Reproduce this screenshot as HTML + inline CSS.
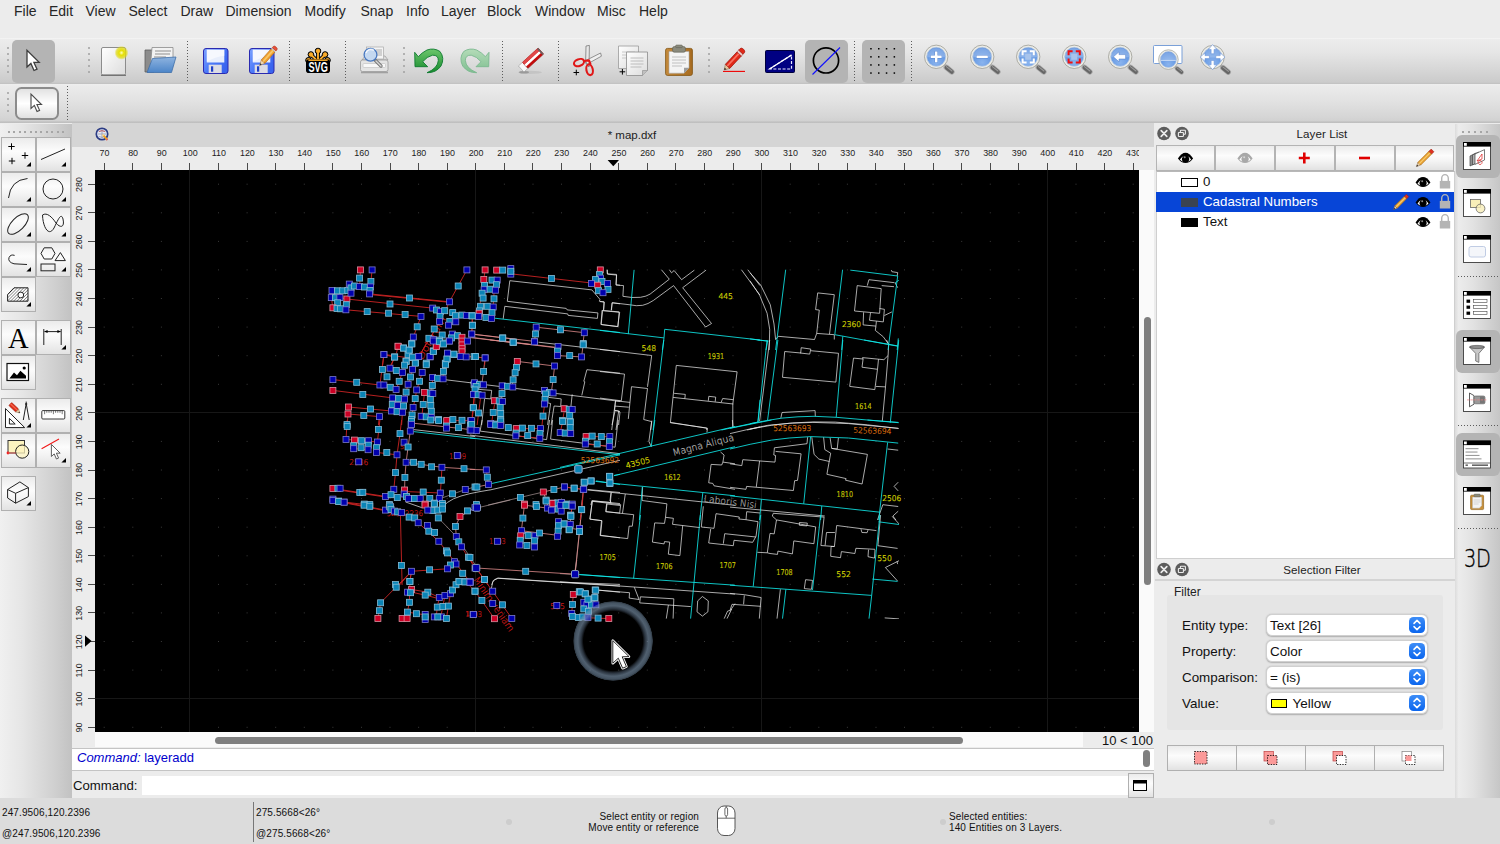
<!DOCTYPE html>
<html><head><meta charset="utf-8"><title>map.dxf</title>
<style>
html,body{margin:0;padding:0}
body{width:1500px;height:844px;overflow:hidden;position:relative;background:#ececec;font-family:"Liberation Sans",sans-serif;color:#1e1e1e}
.a{position:absolute}
.t{position:absolute;white-space:nowrap;line-height:1}
svg{position:absolute;overflow:visible}
.tb{position:absolute;left:0;width:1500px}
.sel{position:absolute;background:#b4b4b4;border-radius:5px}
.vsep{position:absolute;width:1px;background:repeating-linear-gradient(#5c5c5c 0,#5c5c5c 1px,transparent 1px,transparent 3px)}
.hsep{position:absolute;height:1px;background:repeating-linear-gradient(90deg,#5c5c5c 0,#5c5c5c 1px,transparent 1px,transparent 3px)}
.hgrip{position:absolute;height:2px;background:repeating-linear-gradient(90deg,#a6a6a6 0,#a6a6a6 2px,transparent 2px,transparent 5.4px)}
.grip{position:absolute;width:2px}
.grip i{position:absolute;left:0;width:2px;height:2px;background:#a0a0a0;border-radius:1px}
.btn{position:absolute;box-sizing:border-box;border:1px solid #b0b0b0;background:linear-gradient(#ebebeb 0,#fcfcfc 40%,#f5f5f5 60%,#e2e2e2 100%)}
.combo{position:absolute;box-sizing:border-box;width:162px;height:22px;background:#fff;border:1px solid #d0d0d0;border-radius:6px;box-shadow:0 0.5px 1.5px rgba(0,0,0,.25)}
.combo b{position:absolute;right:2px;top:2px;width:16px;height:16px;border-radius:4.5px;background:linear-gradient(#3d8df7,#0b66ee)}
.combo span{position:absolute;left:3.5px;top:3px;font-size:13.5px;line-height:15px;font-weight:normal;color:#111}
</style></head><body>
<div class="a" style="left:0;top:0;width:1500px;height:38px;background:#ececec"></div><div class="t" style="left:14px;top:4.1px;font-size:14px;color:#262626">File</div><div class="t" style="left:49px;top:4.1px;font-size:14px;color:#262626">Edit</div><div class="t" style="left:85.5px;top:4.1px;font-size:14px;color:#262626">View</div><div class="t" style="left:128.5px;top:4.1px;font-size:14px;color:#262626">Select</div><div class="t" style="left:180.5px;top:4.1px;font-size:14px;color:#262626">Draw</div><div class="t" style="left:225.5px;top:4.1px;font-size:14px;color:#262626">Dimension</div><div class="t" style="left:304.5px;top:4.1px;font-size:14px;color:#262626">Modify</div><div class="t" style="left:360.5px;top:4.1px;font-size:14px;color:#262626">Snap</div><div class="t" style="left:406px;top:4.1px;font-size:14px;color:#262626">Info</div><div class="t" style="left:441px;top:4.1px;font-size:14px;color:#262626">Layer</div><div class="t" style="left:487px;top:4.1px;font-size:14px;color:#262626">Block</div><div class="t" style="left:535px;top:4.1px;font-size:14px;color:#262626">Window</div><div class="t" style="left:597px;top:4.1px;font-size:14px;color:#262626">Misc</div><div class="t" style="left:639px;top:4.1px;font-size:14px;color:#262626">Help</div>
<div class="tb" style="top:38px;height:46px;background:linear-gradient(#f6f6f6 0,#ececec 1.5px,#e6e6e6 30%,#d8d8d8 65%,#cbcbcb 96%,#c0c0c0 100%)"></div><div class="tb" style="top:84px;height:38px;background:linear-gradient(#eeeeee 0,#ebebeb 2px,#e2e2e2 45%,#d6d6d6 85%,#d0d0d0 100%)"></div><div class="tb" style="top:120.5px;height:2.5px;background:linear-gradient(#cacaca,#bcbcbc)"></div><div class="sel" style="left:12px;top:40px;width:43px;height:43px"></div><div class="sel" style="left:805px;top:40px;width:43px;height:43px"></div><div class="sel" style="left:862px;top:40px;width:43px;height:43px"></div><div class="vsep" style="left:187px;top:41px;height:40px"></div><div class="vsep" style="left:289px;top:41px;height:40px"></div><div class="vsep" style="left:345px;top:41px;height:40px"></div><div class="vsep" style="left:502px;top:41px;height:40px"></div><div class="vsep" style="left:558px;top:41px;height:40px"></div><div class="vsep" style="left:854px;top:41px;height:40px"></div><div class="vsep" style="left:911px;top:41px;height:40px"></div><div class="vsep" style="left:67px;top:86px;height:34px"></div><div class="grip" style="left:7px;top:0"><i style="top:47px"></i><i style="top:53px"></i><i style="top:59px"></i><i style="top:65px"></i><i style="top:71px"></i></div><div class="grip" style="left:88px;top:0"><i style="top:47px"></i><i style="top:53px"></i><i style="top:59px"></i><i style="top:65px"></i><i style="top:71px"></i></div><div class="grip" style="left:403px;top:0"><i style="top:47px"></i><i style="top:53px"></i><i style="top:59px"></i><i style="top:65px"></i><i style="top:71px"></i></div><div class="grip" style="left:708px;top:0"><i style="top:47px"></i><i style="top:53px"></i><i style="top:59px"></i><i style="top:65px"></i><i style="top:71px"></i></div><div class="grip" style="left:7px;top:0"><i style="top:92px"></i><i style="top:98px"></i><i style="top:104px"></i><i style="top:110px"></i></div><div class="a" style="left:14.5px;top:87.2px;width:44.2px;height:32.5px;box-sizing:border-box;border:2px solid #8c8c8c;border-radius:6.5px;background:linear-gradient(#e2e2e2,#ffffff 50%,#e0e0e0)"></div><svg width="0" height="0" style="left:0;top:0"><defs>
<linearGradient id="gpaper" x1="0" y1="0" x2="1" y2="1"><stop offset="0" stop-color="#fff"/><stop offset="1" stop-color="#dcdcdc"/></linearGradient>
<radialGradient id="gglow"><stop offset="0" stop-color="#ffffc0"/><stop offset=".35" stop-color="#e6e000"/><stop offset=".75" stop-color="#e0da10" stop-opacity=".7"/><stop offset="1" stop-color="#e0da10" stop-opacity="0"/></radialGradient>
<linearGradient id="gfold" x1="0" y1="0" x2="0" y2="1"><stop offset="0" stop-color="#8fb4e0"/><stop offset="1" stop-color="#4c85c8"/></linearGradient>
<linearGradient id="gflop" x1="0" y1="0" x2="1" y2=".6"><stop offset="0" stop-color="#7ea4ff"/><stop offset=".5" stop-color="#4c7af8"/><stop offset="1" stop-color="#3a64ee"/></linearGradient>
<linearGradient id="gundo" x1="0" y1="0" x2="0" y2="1"><stop offset="0" stop-color="#6cc66c"/><stop offset="1" stop-color="#168a2c"/></linearGradient>
<linearGradient id="gredo" x1="0" y1="0" x2="0" y2="1"><stop offset="0" stop-color="#b4dcb8"/><stop offset="1" stop-color="#7fbe90"/></linearGradient>
<radialGradient id="glens" cx=".5" cy=".8" r=".9"><stop offset="0" stop-color="#8ab4ee"/><stop offset=".5" stop-color="#6a9ce4"/><stop offset="1" stop-color="#4c84d8"/></radialGradient>
<linearGradient id="gclip" x1="0" y1="0" x2="1" y2="0"><stop offset="0" stop-color="#c48a3c"/><stop offset="1" stop-color="#a86c20"/></linearGradient>
<linearGradient id="gpencil" x1="0" y1="0" x2="1" y2="1"><stop offset="0" stop-color="#f4c878"/><stop offset="1" stop-color="#d89428"/></linearGradient>
</defs></svg><svg style="left:0px;top:0px" width="1500" height="130" viewBox="0 0 1500 130"><path d="M0,0 L0,16.8 L3.9,13.2 L7,20.3 L10,19 L6.9,12.2 L12.2,12.2 Z" transform="translate(27,50.2)" fill="#fff" stroke="#3c3c3c" stroke-width="1.3" stroke-linejoin="miter"/><path d="M0,0 L0,16.8 L3.9,13.2 L7,20.3 L10,19 L6.9,12.2 L12.2,12.2 Z" transform="translate(31,94) scale(.86)" fill="#fff" stroke="#4a4a4a" stroke-width="1.3"/><rect x="101.5" y="47.5" width="24" height="27.5" rx="1.5" fill="url(#gpaper)" stroke="#8c8c8c" stroke-width="1"/><path d="M101,75.3 h25" stroke="#6e6e6e" stroke-width="1.2"/><circle cx="121.5" cy="52.8" r="7" fill="url(#gglow)"/><path d="M145,50 l8,0 l1,2 l0,20 l-9,0 z" fill="#8c8c8c" stroke="#5e5e5e" stroke-width=".8"/><path d="M152,47.5 l21,0 l0,12 l-23,12 z" fill="#f2f2f2" stroke="#8a8a8a" stroke-width=".8"/><path d="M155,51 h16 M155,54 h15 M154,57 h12" stroke="#b0b0b0" stroke-width="1.6"/><path d="M152.5,58.5 l23.5,-1.5 l-4.5,15.5 l-24.5,0 z" fill="url(#gfold)" stroke="#3f6fa8" stroke-width=".8"/><rect x="203.5" y="48.5" width="24.5" height="25" rx="2.5" fill="url(#gflop)" stroke="#2a2ab0" stroke-width="1"/><rect x="206.8" y="49.7" width="17.5" height="12.8" fill="#e8eefc"/><path d="M206.8,49.7 h17.5 v6 q-9,1 -17.5,6 z" fill="#fff" opacity=".6"/><rect x="208.7" y="64.7" width="13" height="8.3" fill="#dcdce4"/><rect x="211.0" y="66.3" width="2.2" height="5.4" fill="#1d3fc8"/><rect x="249.5" y="48.5" width="24.5" height="25" rx="2.5" fill="url(#gflop)" stroke="#2a2ab0" stroke-width="1"/><rect x="252.8" y="49.7" width="17.5" height="12.8" fill="#e8eefc"/><path d="M252.8,49.7 h17.5 v6 q-9,1 -17.5,6 z" fill="#fff" opacity=".6"/><rect x="254.7" y="64.7" width="13" height="8.3" fill="#dcdce4"/><rect x="257.0" y="66.3" width="2.2" height="5.4" fill="#1d3fc8"/><g transform="translate(259.6,65.6) rotate(-48.4)"><path d="M5.4,-2.5 L0,0 L5.4,2.5 Z" fill="#f0d8b0" stroke="#a07040" stroke-width=".5"/><path d="M0,0 l2.2,-1 v2z" fill="#333"/><rect x="5.4" y="-2.5" width="15" height="5" fill="#f0a030" stroke="#b86a10" stroke-width=".6"/><rect x="5.4" y="-1" width="15" height="1.8" fill="#f8c868"/><rect x="20.4" y="-2.5" width="1.4" height="5" fill="#d8d8d8"/><path d="M21.8,-2.5 h1.6 a1.4,2.5 0 0 1 0,5 h-1.6z" fill="#e85038" stroke="#a02810" stroke-width=".5"/></g><g stroke="#000" fill="#000"><path d="M318,61.6 L318.0,51.0" stroke-width="3.8" stroke-linecap="round" fill="none"/><circle cx="318.0" cy="51.0" r="2.8"/><path d="M318,61.6 L310.9,54.5" stroke-width="3.8" stroke-linecap="round" fill="none"/><circle cx="310.9" cy="54.5" r="2.8"/><path d="M318,61.6 L325.1,54.5" stroke-width="3.8" stroke-linecap="round" fill="none"/><circle cx="325.1" cy="54.5" r="2.8"/><path d="M318,61.6 L308.5,60.3" stroke-width="3.8" stroke-linecap="round" fill="none"/><circle cx="308.5" cy="60.3" r="2.8"/><path d="M318,61.6 L327.5,60.3" stroke-width="3.8" stroke-linecap="round" fill="none"/><circle cx="327.5" cy="60.3" r="2.8"/></g><g stroke="#fbad2c" fill="#fbad2c"><path d="M318,61.6 L318.0,51.0" stroke-width="1.9" stroke-linecap="round" fill="none"/><circle cx="318.0" cy="51.0" r="1.8"/><path d="M318,61.6 L310.9,54.5" stroke-width="1.9" stroke-linecap="round" fill="none"/><circle cx="310.9" cy="54.5" r="1.8"/><path d="M318,61.6 L325.1,54.5" stroke-width="1.9" stroke-linecap="round" fill="none"/><circle cx="325.1" cy="54.5" r="1.8"/><path d="M318,61.6 L308.5,60.3" stroke-width="1.9" stroke-linecap="round" fill="none"/><circle cx="308.5" cy="60.3" r="1.8"/><path d="M318,61.6 L327.5,60.3" stroke-width="1.9" stroke-linecap="round" fill="none"/><circle cx="327.5" cy="60.3" r="1.8"/></g><rect x="306" y="59.2" width="24" height="13.8" rx="2.8" fill="#000"/><path d="M308.4,60.2 h19.2" stroke="#fbad2c" stroke-width="1.5"/><text x="318.1" y="71.7" font-family="Liberation Sans, sans-serif" font-weight="bold" font-size="13.8" fill="#fff" text-anchor="middle" textLength="19.4" lengthAdjust="spacingAndGlyphs">SVG</text><path d="M362,60 l3,-4 h20 l3,4 z" fill="#dcdcdc" stroke="#9a9a9a" stroke-width=".7"/><rect x="366.5" y="47" width="17" height="12" fill="#f4f4f4" stroke="#a8a8a8" stroke-width=".7"/><rect x="376" y="49" width="6" height="7" fill="#d0d0d0"/><rect x="360.5" y="60" width="27.5" height="11.5" rx="2" fill="#e4e4e4" stroke="#9a9a9a" stroke-width=".8"/><rect x="363" y="63.5" width="22.5" height="4" rx="1" fill="#f8f8f8" stroke="#b4b4b4" stroke-width=".5"/><path d="M361,72.5 h27" stroke="#a0a0a0" stroke-width="1.6"/><line x1="375" y1="60" x2="381" y2="66" stroke="#7a7a7a" stroke-width="3.4" stroke-linecap="round"/><line x1="376" y1="61" x2="381" y2="66" stroke="#d8d8d8" stroke-width="1.4" stroke-linecap="round"/><circle cx="370.5" cy="54.8" r="6.4" fill="#c4d8f0" stroke="#4878c0" stroke-width="1.3"/><path d="M366,53 a5,5 0 0 1 8,-2.5" stroke="#fff" stroke-width="1.6" fill="none" opacity=".8"/><path d="M414.7,52.3 L415,66.7 L427.7,66.7 L422.7,61.7 Q427,56.5 432.5,55.2 Q438.5,55 438.3,60.5 Q438,68 427,72.7 Q436,73 441,66 Q445,58 440,51.5 Q434,47.5 427,50 Q422,52.5 418.3,56.7 Z" fill="url(#gundo)" stroke="#0e7a30" stroke-width=".9" stroke-linejoin="round"/><g transform="translate(903.7,0) scale(-1,1)"><path d="M414.7,52.3 L415,66.7 L427.7,66.7 L422.7,61.7 Q427,56.5 432.5,55.2 Q438.5,55 438.3,60.5 Q438,68 427,72.7 Q436,73 441,66 Q445,58 440,51.5 Q434,47.5 427,50 Q422,52.5 418.3,56.7 Z" fill="url(#gredo)" stroke="#7cb890" stroke-width=".9" stroke-linejoin="round"/></g><ellipse cx="530" cy="72.4" rx="12" ry="1.6" fill="#c4c4c4"/><ellipse cx="524" cy="72.2" rx="5" ry="1.3" fill="#9a9a9a"/><g transform="translate(521.2,69) rotate(-42.4)"><rect x="0" y="-4.1" width="5.4" height="8.2" fill="#f8f8f8" stroke="#9a9a9a" stroke-width=".6"/><rect x="5.4" y="-4.1" width="21.3" height="8.2" rx=".8" fill="#c40c0c" stroke="#8c0c0c" stroke-width=".5"/><rect x="5.4" y="-1.2" width="20" height="2.6" fill="#fff"/><rect x="5.4" y="-4.1" width="20" height="2.8" fill="#e04848"/><rect x="25.2" y="-4.1" width="1.6" height="8.2" fill="#666"/></g><path d="M586,46 l3.4,-.6 l-.4,21.6 l-3.4,-4 z" fill="#e8e8e8" stroke="#6a6a6a" stroke-width=".7"/><path d="M600.6,53 l.8,3.2 l-14.4,8 l-1.4,-3.6 z" fill="#f0f0f0" stroke="#6a6a6a" stroke-width=".7"/><ellipse cx="579" cy="62.6" rx="5.2" ry="3.4" transform="rotate(-20 579 62.6)" fill="none" stroke="#e01818" stroke-width="2.1"/><ellipse cx="589.6" cy="69.8" rx="3.2" ry="5.4" transform="rotate(-12 589.6 69.8)" fill="none" stroke="#e01818" stroke-width="2.1"/><path d="M583.4,61 L589,60.4 L590.6,64.6" fill="none" stroke="#e01818" stroke-width="2.2" stroke-linejoin="round"/><path d="M573.5,72.5 h5.6 M576.3,69.7 v5.6" stroke="#000" stroke-width="1"/><path d="M618.5,46 h20 v22.5 h-20 z" fill="url(#gpaper)" stroke="#9a9a9a" stroke-width=".8"/><path d="M622,52 h13 M622,55 h13 M622,58 h13" stroke="#c8c8c8" stroke-width="1"/><path d="M626.5,52 h21 v18.5 l-5,5 h-16 z" fill="url(#gpaper)" stroke="#8c8c8c" stroke-width=".8"/><path d="M647.5,70.5 h-5 v5" fill="#c0c0c0" stroke="#8c8c8c" stroke-width=".6"/><path d="M630.5,58 h13 M630.5,61 h13 M630.5,64 h13 M630.5,67 h11" stroke="#bcbcbc" stroke-width="1"/><path d="M619.6,71.8 h5.6 M622.4,69 v5.6" stroke="#000" stroke-width="1"/><rect x="665.6" y="48.4" width="26.8" height="27" rx="1.8" fill="url(#gclip)" stroke="#80500c" stroke-width=".8"/><path d="M669,51.4 h20 v16.4 l-5,5.4 h-15 z" fill="#f4f4f4" stroke="#a8a8a8" stroke-width=".6"/><path d="M689,67.8 h-5 v5.4 z" fill="#9c9c9c"/><path d="M672,57 h14 M672,60 h14 M672,63 h14 M672,66 h10" stroke="#c0c0c0" stroke-width="1"/><rect x="672.6" y="46.6" width="12.8" height="5.6" rx="1.6" fill="#8a8a7c" stroke="#5c5c50" stroke-width=".6"/><rect x="675.6" y="45" width="6.8" height="2.6" rx="1" fill="#8a8a7c" stroke="#5c5c50" stroke-width=".5"/><path d="M723,71.4 h22" stroke="#f00000" stroke-width="1.1"/><g transform="translate(724.2,70) rotate(-47)"><path d="M5,-3 L0,0 L5,3 Z" fill="#e8c8a0" stroke="#806040" stroke-width=".5"/><path d="M0,0 l2,-1.2 v2.4z" fill="#222"/><rect x="5" y="-3" width="17" height="6" fill="#e02818" stroke="#900c04" stroke-width=".6"/><rect x="5" y="-1.4" width="17" height="1.8" fill="#f87060"/><rect x="22" y="-3" width="2.4" height="6" fill="#f0d0d0" stroke="#900c04" stroke-width=".4"/><path d="M24.4,-3 h2 a2,3 0 0 1 0,6 h-2z" fill="#e02818" stroke="#900c04" stroke-width=".5"/></g><rect x="765.5" y="50.5" width="29" height="22" rx="1" fill="#000082" stroke="#00003c" stroke-width="1"/><path d="M769.5,69 L791.5,55 V69 Z" fill="none" stroke="#e8e8ff" stroke-width="1.2" stroke-dasharray="3 1.6"/><path d="M769.5,69 L791.5,55" stroke="#fff" stroke-width="1.3"/><circle cx="826" cy="60.4" r="12.6" fill="none" stroke="#000" stroke-width="1.7"/><path d="M812.5,74.5 L840,47.5" stroke="#1010ff" stroke-width="1.1"/><rect x="870.2" y="48.0" width="1.5" height="1.5" fill="#000"/><rect x="870.2" y="56.1" width="1.5" height="1.5" fill="#000"/><rect x="870.2" y="64.2" width="1.5" height="1.5" fill="#000"/><rect x="870.2" y="72.3" width="1.5" height="1.5" fill="#000"/><rect x="878.0" y="48.0" width="1.5" height="1.5" fill="#000"/><rect x="878.0" y="56.1" width="1.5" height="1.5" fill="#000"/><rect x="878.0" y="64.2" width="1.5" height="1.5" fill="#000"/><rect x="878.0" y="72.3" width="1.5" height="1.5" fill="#000"/><rect x="885.8" y="48.0" width="1.5" height="1.5" fill="#000"/><rect x="885.8" y="56.1" width="1.5" height="1.5" fill="#000"/><rect x="885.8" y="64.2" width="1.5" height="1.5" fill="#000"/><rect x="885.8" y="72.3" width="1.5" height="1.5" fill="#000"/><rect x="893.6" y="48.0" width="1.5" height="1.5" fill="#000"/><rect x="893.6" y="56.1" width="1.5" height="1.5" fill="#000"/><rect x="893.6" y="64.2" width="1.5" height="1.5" fill="#000"/><rect x="893.6" y="72.3" width="1.5" height="1.5" fill="#000"/><line x1="943.2" y1="64.2" x2="947.2" y2="67.8" stroke="#a4a4a4" stroke-width="2.6"/><line x1="946.4000000000001" y1="67.39999999999999" x2="951.8000000000001" y2="71.8" stroke="#a8a8a8" stroke-width="5.6" stroke-linecap="round"/><line x1="946.6" y1="67.6" x2="951.8000000000001" y2="71.8" stroke="#666" stroke-width="4" stroke-linecap="round"/><line x1="946.4000000000001" y1="66.6" x2="952.0" y2="71.0" stroke="#9a9a9a" stroke-width="1.1" stroke-linecap="round"/><circle cx="936.2" cy="56.8" r="11.7" fill="#ecece6" stroke="#9c9c94" stroke-width=".8"/><circle cx="936.2" cy="56.8" r="9.5" fill="url(#glens)" stroke="#b8c8e0" stroke-width=".7"/><path d="M927.0,57.199999999999996 A9.2,9.2 0 0 1 945.4000000000001,57.199999999999996 Z" fill="#fff" opacity=".22"/><path d="M930.6,56.8 h11.2 M936.2,51.199999999999996 v11.2" stroke="#3c6cc0" stroke-width="3.6" opacity=".55"/><path d="M930.8000000000001,56.8 h10.8 M936.2,51.4 v10.8" stroke="#fff" stroke-width="2.5"/><line x1="989.2" y1="64.2" x2="993.2" y2="67.8" stroke="#a4a4a4" stroke-width="2.6"/><line x1="992.4000000000001" y1="67.39999999999999" x2="997.8000000000001" y2="71.8" stroke="#a8a8a8" stroke-width="5.6" stroke-linecap="round"/><line x1="992.6" y1="67.6" x2="997.8000000000001" y2="71.8" stroke="#666" stroke-width="4" stroke-linecap="round"/><line x1="992.4000000000001" y1="66.6" x2="998.0" y2="71.0" stroke="#9a9a9a" stroke-width="1.1" stroke-linecap="round"/><circle cx="982.2" cy="56.8" r="11.7" fill="#ecece6" stroke="#9c9c94" stroke-width=".8"/><circle cx="982.2" cy="56.8" r="9.5" fill="url(#glens)" stroke="#b8c8e0" stroke-width=".7"/><path d="M973.0,57.199999999999996 A9.2,9.2 0 0 1 991.4000000000001,57.199999999999996 Z" fill="#fff" opacity=".22"/><path d="M976.4,56.8 h11.6" stroke="#3c6cc0" stroke-width="3.6" opacity=".55"/><path d="M976.6,56.8 h11.2" stroke="#fff" stroke-width="2.5"/><line x1="1035.2" y1="64.2" x2="1039.2" y2="67.8" stroke="#a4a4a4" stroke-width="2.6"/><line x1="1038.4" y1="67.39999999999999" x2="1043.8" y2="71.8" stroke="#a8a8a8" stroke-width="5.6" stroke-linecap="round"/><line x1="1038.6000000000001" y1="67.6" x2="1043.8" y2="71.8" stroke="#666" stroke-width="4" stroke-linecap="round"/><line x1="1038.4" y1="66.6" x2="1044.0" y2="71.0" stroke="#9a9a9a" stroke-width="1.1" stroke-linecap="round"/><circle cx="1028.2" cy="56.8" r="11.7" fill="#ecece6" stroke="#9c9c94" stroke-width=".8"/><circle cx="1028.2" cy="56.8" r="9.5" fill="url(#glens)" stroke="#b8c8e0" stroke-width=".7"/><path d="M1019.0,57.199999999999996 A9.2,9.2 0 0 1 1037.4,57.199999999999996 Z" fill="#fff" opacity=".22"/><path d="M1022.6,55.199999999999996 v-4 h4 M1029.8,51.199999999999996 h4 v4 M1033.8,58.4 v4 h-4 M1026.6000000000001,62.4 h-4 v-4" fill="none" stroke="#fff" stroke-width="2"/><rect x="1025.2" y="53.8" width="6" height="6" fill="#a8c4ec"/><line x1="1081.2" y1="64.2" x2="1085.2" y2="67.8" stroke="#a4a4a4" stroke-width="2.6"/><line x1="1084.4" y1="67.39999999999999" x2="1089.8" y2="71.8" stroke="#a8a8a8" stroke-width="5.6" stroke-linecap="round"/><line x1="1084.6000000000001" y1="67.6" x2="1089.8" y2="71.8" stroke="#666" stroke-width="4" stroke-linecap="round"/><line x1="1084.4" y1="66.6" x2="1090.0" y2="71.0" stroke="#9a9a9a" stroke-width="1.1" stroke-linecap="round"/><circle cx="1074.2" cy="56.8" r="11.7" fill="#ecece6" stroke="#9c9c94" stroke-width=".8"/><circle cx="1074.2" cy="56.8" r="9.5" fill="url(#glens)" stroke="#b8c8e0" stroke-width=".7"/><path d="M1065.0,57.199999999999996 A9.2,9.2 0 0 1 1083.4,57.199999999999996 Z" fill="#fff" opacity=".22"/><path d="M1068.6000000000001,55.199999999999996 v-4 h4 M1075.8,51.199999999999996 h4 v4 M1079.8,58.4 v4 h-4 M1072.6000000000001,62.4 h-4 v-4" fill="none" stroke="#f01010" stroke-width="2"/><rect x="1071.2" y="53.8" width="6" height="6" fill="#a8c4ec"/><line x1="1127.2" y1="64.2" x2="1131.2" y2="67.8" stroke="#a4a4a4" stroke-width="2.6"/><line x1="1130.4" y1="67.39999999999999" x2="1135.8" y2="71.8" stroke="#a8a8a8" stroke-width="5.6" stroke-linecap="round"/><line x1="1130.6000000000001" y1="67.6" x2="1135.8" y2="71.8" stroke="#666" stroke-width="4" stroke-linecap="round"/><line x1="1130.4" y1="66.6" x2="1136.0" y2="71.0" stroke="#9a9a9a" stroke-width="1.1" stroke-linecap="round"/><circle cx="1120.2" cy="56.8" r="11.7" fill="#ecece6" stroke="#9c9c94" stroke-width=".8"/><circle cx="1120.2" cy="56.8" r="9.5" fill="url(#glens)" stroke="#b8c8e0" stroke-width=".7"/><path d="M1111.0,57.199999999999996 A9.2,9.2 0 0 1 1129.4,57.199999999999996 Z" fill="#fff" opacity=".22"/><path d="M1113.4,56.8 l5.6,-5 v2.8 h6.6 v4.4 h-6.6 v2.8 z" fill="#fff" stroke="#4a78c8" stroke-width=".5"/><rect x="1153.5" y="45.5" width="28.5" height="18" rx="1" fill="#fff" stroke="#7aa0d8" stroke-width="1"/><g transform="translate(1168.4,59.6) scale(.84) translate(-1168.4,-59.6)"><line x1="1175.4" y1="67.0" x2="1179.4" y2="70.6" stroke="#a4a4a4" stroke-width="2.6"/><line x1="1178.6000000000001" y1="70.2" x2="1184.0" y2="74.6" stroke="#a8a8a8" stroke-width="5.6" stroke-linecap="round"/><line x1="1178.8000000000002" y1="70.4" x2="1184.0" y2="74.6" stroke="#666" stroke-width="4" stroke-linecap="round"/><line x1="1178.6000000000001" y1="69.4" x2="1184.2" y2="73.8" stroke="#9a9a9a" stroke-width="1.1" stroke-linecap="round"/><circle cx="1168.4" cy="59.6" r="11.7" fill="#ecece6" stroke="#9c9c94" stroke-width=".8"/><circle cx="1168.4" cy="59.6" r="9.5" fill="url(#glens)" stroke="#b8c8e0" stroke-width=".7"/><path d="M1159.2,60.0 A9.2,9.2 0 0 1 1177.6000000000001,60.0 Z" fill="#fff" opacity=".22"/><path d="M1159.6,60.6 h17.6" stroke="#d8e6fa" stroke-width="1.2" opacity=".8"/></g><line x1="1219.6" y1="64.5" x2="1223.6" y2="68.1" stroke="#a4a4a4" stroke-width="2.6"/><line x1="1222.8" y1="67.7" x2="1228.1999999999998" y2="72.1" stroke="#a8a8a8" stroke-width="5.6" stroke-linecap="round"/><line x1="1223.0" y1="67.9" x2="1228.1999999999998" y2="72.1" stroke="#666" stroke-width="4" stroke-linecap="round"/><line x1="1222.8" y1="66.9" x2="1228.3999999999999" y2="71.3" stroke="#9a9a9a" stroke-width="1.1" stroke-linecap="round"/><circle cx="1212.6" cy="57.1" r="11.7" fill="#ecece6" stroke="#9c9c94" stroke-width=".8"/><circle cx="1212.6" cy="57.1" r="9.5" fill="url(#glens)" stroke="#b8c8e0" stroke-width=".7"/><path d="M1203.3999999999999,57.5 A9.2,9.2 0 0 1 1221.8,57.5 Z" fill="#fff" opacity=".22"/><g fill="#fff" stroke="#6a94d8" stroke-width=".6"><path d="M1212.6,44.6 l4.2,4.8 h-2.7 v4.4 h-3 v-4.4 h-2.7z"/><path d="M1212.6,69.6 l4.2,-4.8 h-2.7 v-4.4 h-3 v4.4 h-2.7z"/><path d="M1200.2,57.1 l4.8,-4.2 v2.7 h4.4 v3 h-4.4 v2.7z"/><path d="M1225,57.1 l-4.8,-4.2 v2.7 h-4.4 v3 h4.4 v2.7z"/></g></svg>
<div class="a" style="left:0;top:124px;width:72px;height:674px;background:linear-gradient(90deg,#f0f0f0 0,#e6e6e6 30%,#d0d0d0 75%,#c2c2c2 100%)"></div><div class="hgrip" style="left:8px;top:131px;width:56px"></div><div class="btn" style="left:1px;top:137px;width:35px;height:35px"></div><div class="btn" style="left:36px;top:137px;width:35px;height:35px"></div><div class="btn" style="left:1px;top:172px;width:35px;height:35px"></div><div class="btn" style="left:36px;top:172px;width:35px;height:35px"></div><div class="btn" style="left:1px;top:207px;width:35px;height:35px"></div><div class="btn" style="left:36px;top:207px;width:35px;height:35px"></div><div class="btn" style="left:1px;top:242px;width:35px;height:35px"></div><div class="btn" style="left:36px;top:242px;width:35px;height:35px"></div><div class="btn" style="left:1px;top:277px;width:35px;height:35px"></div><div class="btn" style="left:1px;top:320px;width:35px;height:35px"></div><div class="btn" style="left:36px;top:320px;width:35px;height:35px"></div><div class="btn" style="left:1px;top:355px;width:35px;height:35px"></div><div class="btn" style="left:1px;top:398px;width:35px;height:35px"></div><div class="btn" style="left:36px;top:398px;width:35px;height:35px"></div><div class="btn" style="left:1px;top:433px;width:35px;height:35px"></div><div class="btn" style="left:36px;top:433px;width:35px;height:35px"></div><div class="btn" style="left:1px;top:476px;width:35px;height:35px"></div><svg style="left:0px;top:0px" width="80" height="520" viewBox="0 0 80 520"><path d="M8.3,146.5 h6.4 M11.5,143.3 v6.4" stroke="#000" stroke-width="1"/><path d="M21.8,155.5 h6.4 M25,152.3 v6.4" stroke="#000" stroke-width="1"/><path d="M8.8,161 h6.4 M12,157.8 v6.4" stroke="#000" stroke-width="1"/><path d="M31,166.5 l-4.6,0 l4.6,-4.6 z" fill="#000"/><path d="M41,159.5 L65,149" fill="none" stroke="#222" stroke-width="1"/><path d="M66,166.5 l-4.6,0 l4.6,-4.6 z" fill="#000"/><path d="M8.5,198 Q10.5,180 27.5,178.5" fill="none" stroke="#222" stroke-width="1"/><path d="M31,201.5 l-4.6,0 l4.6,-4.6 z" fill="#000"/><circle cx="53" cy="189" r="10" fill="none" stroke="#222" stroke-width="1"/><path d="M66,201.5 l-4.6,0 l4.6,-4.6 z" fill="#000"/><ellipse cx="18" cy="224" rx="13.2" ry="6.2" transform="rotate(-45 18 224)" fill="none" stroke="#222" stroke-width="1"/><path d="M31,236.5 l-4.6,0 l4.6,-4.6 z" fill="#000"/><path d="M42.5,215 C43,228 49,237 54,228 C58,220 61,212 63,219 C65,228 60,228 56,223 C52,217 47,212 42.5,215 Z" fill="none" stroke="#222" stroke-width="1"/><path d="M66,236.5 l-4.6,0 l4.6,-4.6 z" fill="#000"/><path d="M27,264.5 L14,263.8 Q7.6,262 9,257.6 Q10.6,254 14.6,255.4" fill="none" stroke="#222" stroke-width="1"/><path d="M31,271.5 l-4.6,0 l4.6,-4.6 z" fill="#000"/><path d="M44.2,247.8 h7.6 l3.2,5.6 l-3.2,5.6 h-7.6 l-3.2,-5.6 z" fill="none" stroke="#222" stroke-width="1"/><path d="M60.4,252.6 l5,8 h-10.4 z" fill="none" stroke="#222" stroke-width="1"/><rect x="41" y="264" width="14" height="6.8" fill="none" stroke="#222" stroke-width="1"/><path d="M66,271.5 l-4.6,0 l4.6,-4.6 z" fill="#000"/><defs><pattern id="hat" width="2.2" height="2.2" patternUnits="userSpaceOnUse" patternTransform="rotate(45)"><rect width="2.2" height="2.2" fill="#fff"/><line x1="0" y1="0" x2="0" y2="2.2" stroke="#555" stroke-width="1.1"/></pattern></defs><path d="M14,287.8 h14 v13.4 h-20.4 v-6.6 z" fill="url(#hat)" stroke="#222" stroke-width="1"/><circle cx="20.8" cy="295" r="2.9" fill="#fff" stroke="#222" stroke-width="1"/><path d="M31,306.5 l-4.6,0 l4.6,-4.6 z" fill="#000"/><text x="18.2" y="347.5" font-family="Liberation Serif, serif" font-size="28.5" fill="#000" text-anchor="middle">A</text><path d="M43.8,329 v16 M61.2,329 v16 M44.6,331.6 h16" fill="none" stroke="#222" stroke-width="1"/><path d="M44.2,331.6 l3.4,-1.5 v3z M60.8,331.6 l-3.4,-1.5 v3z" fill="#000"/><path d="M66,349.5 l-4.6,0 l4.6,-4.6 z" fill="#000"/><rect x="7" y="363.5" width="21.5" height="17" fill="#fff" stroke="#111" stroke-width="1.2"/><path d="M9.4,378.4 l4.6,-6 l3,2.8 l3.4,-4.4 l5.6,5 v2.6 z" fill="#000"/><circle cx="24.2" cy="368" r="1.6" fill="#000"/><path d="M5.5,408.6 v19 h19.2 z" fill="#fff" stroke="#222" stroke-width="1"/><path d="M9.4,418.4 v5.6 h5.8 z" fill="none" stroke="#222" stroke-width="1"/><g transform="translate(10.2,404) rotate(43)"><rect x="0" y="-2.1" width="9.6" height="4.2" rx=".8" fill="#e02c18" stroke="#901808" stroke-width=".5"/><rect x="0" y="-.9" width="9.6" height="1.2" fill="#f46a50"/><path d="M9.6,-2.1 l3.6,2.1 l-3.6,2.1z" fill="#e8c8a0" stroke="#806040" stroke-width=".4"/><path d="M13.2,0 l-1.4,-.8 v1.6z" fill="#222"/></g><path d="M26.2,403.6 l-2.9,16.4 M26.2,403.6 l3,16.4 M26.2,401.6 v2" fill="none" stroke="#222" stroke-width="1"/><circle cx="26.2" cy="404" r="1.1" fill="#222"/><path d="M31,427.5 l-4.6,0 l4.6,-4.6 z" fill="#000"/><rect x="41.8" y="410.6" width="23" height="8.4" rx="1" fill="#fff" stroke="#222" stroke-width=".9"/><path d="M44.6,410.8 v3.4" stroke="#222" stroke-width=".6"/><path d="M46.8,410.8 v2" stroke="#222" stroke-width=".6"/><path d="M49.0,410.8 v2" stroke="#222" stroke-width=".6"/><path d="M51.2,410.8 v2" stroke="#222" stroke-width=".6"/><path d="M53.4,410.8 v3.4" stroke="#222" stroke-width=".6"/><path d="M55.6,410.8 v2" stroke="#222" stroke-width=".6"/><path d="M57.8,410.8 v2" stroke="#222" stroke-width=".6"/><path d="M60.0,410.8 v2" stroke="#222" stroke-width=".6"/><path d="M62.2,410.8 v3.4" stroke="#222" stroke-width=".6"/><rect x="8" y="440.5" width="16.5" height="12.5" fill="#fdf4c0" stroke="#333" stroke-width="1"/><circle cx="22.2" cy="451.6" r="6.6" fill="#fdf4c0" fill-opacity=".75" stroke="#222" stroke-width="1"/><circle cx="8" cy="453" r="1.4" fill="#f02020"/><path d="M8,453 h8" stroke="#f05050" stroke-width=".8"/><path d="M41.6,448.8 L59,439" stroke="#f01818" stroke-width="1.1"/><path d="M0,0 L0,16.8 L3.9,13.2 L7,20.3 L10,19 L6.9,12.2 L12.2,12.2 Z" transform="translate(51.4,444.4) scale(.72)" fill="#fff" stroke="#555" stroke-width="1.3"/><path d="M66,462.5 l-4.6,0 l4.6,-4.6 z" fill="#000"/><path d="M7.6,489.5 L19.9,481.9 L28.4,487.6 V496.6 L15.6,503.2 L7.6,498 Z M7.6,489.5 L15.6,493.3 L28.4,487.6 M15.6,493.3 V503.2" fill="none" stroke="#222" stroke-width="1" stroke-linejoin="round"/><path d="M31,505.5 l-4.6,0 l4.6,-4.6 z" fill="#000"/></svg>
<div class="a" style="left:72px;top:123px;width:1082px;height:24px;background:#d5d5d5"></div><div class="t" style="left:532px;width:200px;text-align:center;top:130px;font-size:11.5px;color:#1c1c1c">* map.dxf</div><svg style="left:0px;top:0px" width="200" height="150" viewBox="0 0 200 150"><circle cx="102" cy="134" r="5.7" fill="#e4e8f4" stroke="#2c3c84" stroke-width="1.7"/><path d="M98,134 h8 M102,130 v8 M98.6,131.6 q3.4,-2 6.8,0 M98.6,136.4 q3.4,2 6.8,0" stroke="#8c90a8" stroke-width=".7" fill="none"/><path d="M99,131.5 q3,-1.6 6,0" stroke="#d04040" stroke-width=".7" fill="none"/><path d="M102.6,134.6 l4.6,5" stroke="#f0a020" stroke-width="2" stroke-linecap="butt"/><path d="M102.6,134.6 l1,1.1" stroke="#f4e0b0" stroke-width="2"/><path d="M106.6,139 l.9,1" stroke="#e06060" stroke-width="2"/></svg><div class="a" style="left:72px;top:147px;width:1082px;height:586px;background:#ececec"></div><div class="a" style="left:1139px;top:170px;width:15px;height:563px;background:#fafafa"></div><div class="a" style="left:95px;top:732px;width:1059px;height:16px;background:#fafafa"></div><div class="a" style="left:1143.5px;top:317px;width:7px;height:268px;border-radius:4px;background:#7f7f7f"></div><div class="a" style="left:215px;top:736.5px;width:748px;height:7.5px;border-radius:4px;background:#7f7f7f"></div><div class="a" style="left:1083px;top:732px;width:71px;height:16px;background:#ececec"></div><div class="t" style="left:1053px;width:100px;text-align:right;top:733.5px;font-size:13px;color:#111">10 &lt; 100</div><div class="a" style="left:95px;top:170px;width:1044px;height:562px;background:#000"></div><svg class="a" style="left:0;top:0" width="1500" height="844" viewBox="0 0 1500 844"><g stroke="#4a4a4a" stroke-width="1" shape-rendering="crispEdges"><line x1="104.5" y1="163" x2="104.5" y2="170"/><line x1="132.5" y1="163" x2="132.5" y2="170"/><line x1="161.5" y1="163" x2="161.5" y2="170"/><line x1="189.5" y1="163" x2="189.5" y2="170"/><line x1="218.5" y1="163" x2="218.5" y2="170"/><line x1="247.5" y1="163" x2="247.5" y2="170"/><line x1="275.5" y1="163" x2="275.5" y2="170"/><line x1="304.5" y1="163" x2="304.5" y2="170"/><line x1="332.5" y1="163" x2="332.5" y2="170"/><line x1="361.5" y1="163" x2="361.5" y2="170"/><line x1="390.5" y1="163" x2="390.5" y2="170"/><line x1="418.5" y1="163" x2="418.5" y2="170"/><line x1="447.5" y1="163" x2="447.5" y2="170"/><line x1="475.5" y1="163" x2="475.5" y2="170"/><line x1="504.5" y1="163" x2="504.5" y2="170"/><line x1="532.5" y1="163" x2="532.5" y2="170"/><line x1="561.5" y1="163" x2="561.5" y2="170"/><line x1="590.5" y1="163" x2="590.5" y2="170"/><line x1="618.5" y1="163" x2="618.5" y2="170"/><line x1="647.5" y1="163" x2="647.5" y2="170"/><line x1="675.5" y1="163" x2="675.5" y2="170"/><line x1="704.5" y1="163" x2="704.5" y2="170"/><line x1="733.5" y1="163" x2="733.5" y2="170"/><line x1="761.5" y1="163" x2="761.5" y2="170"/><line x1="790.5" y1="163" x2="790.5" y2="170"/><line x1="818.5" y1="163" x2="818.5" y2="170"/><line x1="847.5" y1="163" x2="847.5" y2="170"/><line x1="875.5" y1="163" x2="875.5" y2="170"/><line x1="904.5" y1="163" x2="904.5" y2="170"/><line x1="933.5" y1="163" x2="933.5" y2="170"/><line x1="961.5" y1="163" x2="961.5" y2="170"/><line x1="990.5" y1="163" x2="990.5" y2="170"/><line x1="1018.5" y1="163" x2="1018.5" y2="170"/><line x1="1047.5" y1="163" x2="1047.5" y2="170"/><line x1="1076.5" y1="163" x2="1076.5" y2="170"/><line x1="1104.5" y1="163" x2="1104.5" y2="170"/><line x1="1133.5" y1="163" x2="1133.5" y2="170"/><line x1="88" y1="727.5" x2="95" y2="727.5"/><line x1="88" y1="698.5" x2="95" y2="698.5"/><line x1="88" y1="670.5" x2="95" y2="670.5"/><line x1="88" y1="641.5" x2="95" y2="641.5"/><line x1="88" y1="612.5" x2="95" y2="612.5"/><line x1="88" y1="584.5" x2="95" y2="584.5"/><line x1="88" y1="555.5" x2="95" y2="555.5"/><line x1="88" y1="527.5" x2="95" y2="527.5"/><line x1="88" y1="498.5" x2="95" y2="498.5"/><line x1="88" y1="470.5" x2="95" y2="470.5"/><line x1="88" y1="441.5" x2="95" y2="441.5"/><line x1="88" y1="412.5" x2="95" y2="412.5"/><line x1="88" y1="384.5" x2="95" y2="384.5"/><line x1="88" y1="355.5" x2="95" y2="355.5"/><line x1="88" y1="327.5" x2="95" y2="327.5"/><line x1="88" y1="298.5" x2="95" y2="298.5"/><line x1="88" y1="269.5" x2="95" y2="269.5"/><line x1="88" y1="241.5" x2="95" y2="241.5"/><line x1="88" y1="212.5" x2="95" y2="212.5"/><line x1="88" y1="184.5" x2="95" y2="184.5"/></g><defs><clipPath id="rc"><rect x="95" y="146" width="1044" height="24"/></clipPath></defs><g font-family="Liberation Sans, sans-serif" font-size="9.1" fill="#1c1c1c" text-anchor="middle" clip-path="url(#rc)"><text transform="translate(104.5,156) scale(.98,1)">70</text><text transform="translate(133.1,156) scale(.98,1)">80</text><text transform="translate(161.7,156) scale(.98,1)">90</text><text transform="translate(190.3,156) scale(.98,1)">100</text><text transform="translate(218.8,156) scale(.98,1)">110</text><text transform="translate(247.4,156) scale(.98,1)">120</text><text transform="translate(276.0,156) scale(.98,1)">130</text><text transform="translate(304.6,156) scale(.98,1)">140</text><text transform="translate(333.2,156) scale(.98,1)">150</text><text transform="translate(361.8,156) scale(.98,1)">160</text><text transform="translate(390.3,156) scale(.98,1)">170</text><text transform="translate(418.9,156) scale(.98,1)">180</text><text transform="translate(447.5,156) scale(.98,1)">190</text><text transform="translate(476.1,156) scale(.98,1)">200</text><text transform="translate(504.7,156) scale(.98,1)">210</text><text transform="translate(533.3,156) scale(.98,1)">220</text><text transform="translate(561.8,156) scale(.98,1)">230</text><text transform="translate(590.4,156) scale(.98,1)">240</text><text transform="translate(619.0,156) scale(.98,1)">250</text><text transform="translate(647.6,156) scale(.98,1)">260</text><text transform="translate(676.2,156) scale(.98,1)">270</text><text transform="translate(704.8,156) scale(.98,1)">280</text><text transform="translate(733.3,156) scale(.98,1)">290</text><text transform="translate(761.9,156) scale(.98,1)">300</text><text transform="translate(790.5,156) scale(.98,1)">310</text><text transform="translate(819.1,156) scale(.98,1)">320</text><text transform="translate(847.7,156) scale(.98,1)">330</text><text transform="translate(876.3,156) scale(.98,1)">340</text><text transform="translate(904.8,156) scale(.98,1)">350</text><text transform="translate(933.4,156) scale(.98,1)">360</text><text transform="translate(962.0,156) scale(.98,1)">370</text><text transform="translate(990.6,156) scale(.98,1)">380</text><text transform="translate(1019.2,156) scale(.98,1)">390</text><text transform="translate(1047.7,156) scale(.98,1)">400</text><text transform="translate(1076.3,156) scale(.98,1)">410</text><text transform="translate(1104.9,156) scale(.98,1)">420</text><text transform="translate(1133.5,156) scale(.98,1)">430</text></g><g font-family="Liberation Sans, sans-serif" font-size="9.1" fill="#1c1c1c" text-anchor="middle"><text transform="translate(81.6,727.6) rotate(-90) scale(.98,1)">90</text><text transform="translate(81.6,699.0) rotate(-90) scale(.98,1)">100</text><text transform="translate(81.6,670.4) rotate(-90) scale(.98,1)">110</text><text transform="translate(81.6,641.8) rotate(-90) scale(.98,1)">120</text><text transform="translate(81.6,613.2) rotate(-90) scale(.98,1)">130</text><text transform="translate(81.6,584.7) rotate(-90) scale(.98,1)">140</text><text transform="translate(81.6,556.1) rotate(-90) scale(.98,1)">150</text><text transform="translate(81.6,527.5) rotate(-90) scale(.98,1)">160</text><text transform="translate(81.6,498.9) rotate(-90) scale(.98,1)">170</text><text transform="translate(81.6,470.3) rotate(-90) scale(.98,1)">180</text><text transform="translate(81.6,441.7) rotate(-90) scale(.98,1)">190</text><text transform="translate(81.6,413.2) rotate(-90) scale(.98,1)">200</text><text transform="translate(81.6,384.6) rotate(-90) scale(.98,1)">210</text><text transform="translate(81.6,356.0) rotate(-90) scale(.98,1)">220</text><text transform="translate(81.6,327.4) rotate(-90) scale(.98,1)">230</text><text transform="translate(81.6,298.8) rotate(-90) scale(.98,1)">240</text><text transform="translate(81.6,270.2) rotate(-90) scale(.98,1)">250</text><text transform="translate(81.6,241.7) rotate(-90) scale(.98,1)">260</text><text transform="translate(81.6,213.1) rotate(-90) scale(.98,1)">270</text><text transform="translate(81.6,184.5) rotate(-90) scale(.98,1)">280</text></g><path d="M607.6,160 L619,160 L613.3,166.3 Z" fill="#000"/><path d="M85,635.4 L85,646.8 L91.6,641.1 Z" fill="#000"/></svg><svg style="left:0;top:0" width="1500" height="844" viewBox="0 0 1500 844"><defs><clipPath id="cv"><rect x="95" y="170" width="1044" height="562"/></clipPath><clipPath id="dw"><rect x="327" y="269.3" width="572.5" height="349.7"/></clipPath><radialGradient id="halo" cx="613.1" cy="641" r="40" gradientUnits="userSpaceOnUse"><stop offset=".74" stop-color="#6c84a0" stop-opacity="0"/><stop offset=".8" stop-color="#6c84a0" stop-opacity=".38"/><stop offset=".88" stop-color="#86a0ba" stop-opacity=".6"/><stop offset=".95" stop-color="#7c96b0" stop-opacity=".56"/><stop offset=".985" stop-color="#6c849c" stop-opacity=".45"/><stop offset="1" stop-color="#7088a0" stop-opacity="0"/></radialGradient></defs><style>.hb,.ht,.hr{width:6px;height:6px;stroke-width:.8px}.hb{fill:#0000ae;stroke:#7c7cc8}.ht{fill:#0a84b6;stroke:#86bcd6}.hr{fill:#cc0024;stroke:#d890a0}</style><g clip-path="url(#cv)"><g stroke="#171717" stroke-width="1" shape-rendering="crispEdges"><line x1="189.5" y1="170" x2="189.5" y2="732"/><line x1="475.5" y1="170" x2="475.5" y2="732"/><line x1="761.5" y1="170" x2="761.5" y2="732"/><line x1="1047.5" y1="170" x2="1047.5" y2="732"/><line x1="95" y1="698.5" x2="1139" y2="698.5"/><line x1="95" y1="412.5" x2="1139" y2="412.5"/></g><path d="M103.7,727.3h1M103.7,670.1h1M103.7,641.5h1M103.7,612.9h1M103.7,584.4h1M103.7,555.8h1M103.7,527.2h1M103.7,498.6h1M103.7,470.0h1M103.7,441.4h1M103.7,384.3h1M103.7,355.7h1M103.7,327.1h1M103.7,298.5h1M103.7,269.9h1M103.7,241.4h1M103.7,212.8h1M103.7,184.2h1M132.3,727.3h1M132.3,670.1h1M132.3,641.5h1M132.3,612.9h1M132.3,584.4h1M132.3,555.8h1M132.3,527.2h1M132.3,498.6h1M132.3,470.0h1M132.3,441.4h1M132.3,384.3h1M132.3,355.7h1M132.3,327.1h1M132.3,298.5h1M132.3,269.9h1M132.3,241.4h1M132.3,212.8h1M132.3,184.2h1M160.9,727.3h1M160.9,670.1h1M160.9,641.5h1M160.9,612.9h1M160.9,584.4h1M160.9,555.8h1M160.9,527.2h1M160.9,498.6h1M160.9,470.0h1M160.9,441.4h1M160.9,384.3h1M160.9,355.7h1M160.9,327.1h1M160.9,298.5h1M160.9,269.9h1M160.9,241.4h1M160.9,212.8h1M160.9,184.2h1M218.0,727.3h1M218.0,670.1h1M218.0,641.5h1M218.0,612.9h1M218.0,584.4h1M218.0,555.8h1M218.0,527.2h1M218.0,498.6h1M218.0,470.0h1M218.0,441.4h1M218.0,384.3h1M218.0,355.7h1M218.0,327.1h1M218.0,298.5h1M218.0,269.9h1M218.0,241.4h1M218.0,212.8h1M218.0,184.2h1M246.6,727.3h1M246.6,670.1h1M246.6,641.5h1M246.6,612.9h1M246.6,584.4h1M246.6,555.8h1M246.6,527.2h1M246.6,498.6h1M246.6,470.0h1M246.6,441.4h1M246.6,384.3h1M246.6,355.7h1M246.6,327.1h1M246.6,298.5h1M246.6,269.9h1M246.6,241.4h1M246.6,212.8h1M246.6,184.2h1M275.2,727.3h1M275.2,670.1h1M275.2,641.5h1M275.2,612.9h1M275.2,584.4h1M275.2,555.8h1M275.2,527.2h1M275.2,498.6h1M275.2,470.0h1M275.2,441.4h1M275.2,384.3h1M275.2,355.7h1M275.2,327.1h1M275.2,298.5h1M275.2,269.9h1M275.2,241.4h1M275.2,212.8h1M275.2,184.2h1M303.8,727.3h1M303.8,670.1h1M303.8,641.5h1M303.8,612.9h1M303.8,584.4h1M303.8,555.8h1M303.8,527.2h1M303.8,498.6h1M303.8,470.0h1M303.8,441.4h1M303.8,384.3h1M303.8,355.7h1M303.8,327.1h1M303.8,298.5h1M303.8,269.9h1M303.8,241.4h1M303.8,212.8h1M303.8,184.2h1M332.4,727.3h1M332.4,670.1h1M332.4,641.5h1M332.4,612.9h1M332.4,584.4h1M332.4,555.8h1M332.4,527.2h1M332.4,498.6h1M332.4,470.0h1M332.4,441.4h1M332.4,384.3h1M332.4,355.7h1M332.4,327.1h1M332.4,298.5h1M332.4,269.9h1M332.4,241.4h1M332.4,212.8h1M332.4,184.2h1M361.0,727.3h1M361.0,670.1h1M361.0,641.5h1M361.0,612.9h1M361.0,584.4h1M361.0,555.8h1M361.0,527.2h1M361.0,498.6h1M361.0,470.0h1M361.0,441.4h1M361.0,384.3h1M361.0,355.7h1M361.0,327.1h1M361.0,298.5h1M361.0,269.9h1M361.0,241.4h1M361.0,212.8h1M361.0,184.2h1M389.5,727.3h1M389.5,670.1h1M389.5,641.5h1M389.5,612.9h1M389.5,584.4h1M389.5,555.8h1M389.5,527.2h1M389.5,498.6h1M389.5,470.0h1M389.5,441.4h1M389.5,384.3h1M389.5,355.7h1M389.5,327.1h1M389.5,298.5h1M389.5,269.9h1M389.5,241.4h1M389.5,212.8h1M389.5,184.2h1M418.1,727.3h1M418.1,670.1h1M418.1,641.5h1M418.1,612.9h1M418.1,584.4h1M418.1,555.8h1M418.1,527.2h1M418.1,498.6h1M418.1,470.0h1M418.1,441.4h1M418.1,384.3h1M418.1,355.7h1M418.1,327.1h1M418.1,298.5h1M418.1,269.9h1M418.1,241.4h1M418.1,212.8h1M418.1,184.2h1M446.7,727.3h1M446.7,670.1h1M446.7,641.5h1M446.7,612.9h1M446.7,584.4h1M446.7,555.8h1M446.7,527.2h1M446.7,498.6h1M446.7,470.0h1M446.7,441.4h1M446.7,384.3h1M446.7,355.7h1M446.7,327.1h1M446.7,298.5h1M446.7,269.9h1M446.7,241.4h1M446.7,212.8h1M446.7,184.2h1M503.9,727.3h1M503.9,670.1h1M503.9,641.5h1M503.9,612.9h1M503.9,584.4h1M503.9,555.8h1M503.9,527.2h1M503.9,498.6h1M503.9,470.0h1M503.9,441.4h1M503.9,384.3h1M503.9,355.7h1M503.9,327.1h1M503.9,298.5h1M503.9,269.9h1M503.9,241.4h1M503.9,212.8h1M503.9,184.2h1M532.5,727.3h1M532.5,670.1h1M532.5,641.5h1M532.5,612.9h1M532.5,584.4h1M532.5,555.8h1M532.5,527.2h1M532.5,498.6h1M532.5,470.0h1M532.5,441.4h1M532.5,384.3h1M532.5,355.7h1M532.5,327.1h1M532.5,298.5h1M532.5,269.9h1M532.5,241.4h1M532.5,212.8h1M532.5,184.2h1M561.0,727.3h1M561.0,670.1h1M561.0,641.5h1M561.0,612.9h1M561.0,584.4h1M561.0,555.8h1M561.0,527.2h1M561.0,498.6h1M561.0,470.0h1M561.0,441.4h1M561.0,384.3h1M561.0,355.7h1M561.0,327.1h1M561.0,298.5h1M561.0,269.9h1M561.0,241.4h1M561.0,212.8h1M561.0,184.2h1M589.6,727.3h1M589.6,670.1h1M589.6,641.5h1M589.6,612.9h1M589.6,584.4h1M589.6,555.8h1M589.6,527.2h1M589.6,498.6h1M589.6,470.0h1M589.6,441.4h1M589.6,384.3h1M589.6,355.7h1M589.6,327.1h1M589.6,298.5h1M589.6,269.9h1M589.6,241.4h1M589.6,212.8h1M589.6,184.2h1M618.2,727.3h1M618.2,670.1h1M618.2,641.5h1M618.2,612.9h1M618.2,584.4h1M618.2,555.8h1M618.2,527.2h1M618.2,498.6h1M618.2,470.0h1M618.2,441.4h1M618.2,384.3h1M618.2,355.7h1M618.2,327.1h1M618.2,298.5h1M618.2,269.9h1M618.2,241.4h1M618.2,212.8h1M618.2,184.2h1M646.8,727.3h1M646.8,670.1h1M646.8,641.5h1M646.8,612.9h1M646.8,584.4h1M646.8,555.8h1M646.8,527.2h1M646.8,498.6h1M646.8,470.0h1M646.8,441.4h1M646.8,384.3h1M646.8,355.7h1M646.8,327.1h1M646.8,298.5h1M646.8,269.9h1M646.8,241.4h1M646.8,212.8h1M646.8,184.2h1M675.4,727.3h1M675.4,670.1h1M675.4,641.5h1M675.4,612.9h1M675.4,584.4h1M675.4,555.8h1M675.4,527.2h1M675.4,498.6h1M675.4,470.0h1M675.4,441.4h1M675.4,384.3h1M675.4,355.7h1M675.4,327.1h1M675.4,298.5h1M675.4,269.9h1M675.4,241.4h1M675.4,212.8h1M675.4,184.2h1M704.0,727.3h1M704.0,670.1h1M704.0,641.5h1M704.0,612.9h1M704.0,584.4h1M704.0,555.8h1M704.0,527.2h1M704.0,498.6h1M704.0,470.0h1M704.0,441.4h1M704.0,384.3h1M704.0,355.7h1M704.0,327.1h1M704.0,298.5h1M704.0,269.9h1M704.0,241.4h1M704.0,212.8h1M704.0,184.2h1M732.5,727.3h1M732.5,670.1h1M732.5,641.5h1M732.5,612.9h1M732.5,584.4h1M732.5,555.8h1M732.5,527.2h1M732.5,498.6h1M732.5,470.0h1M732.5,441.4h1M732.5,384.3h1M732.5,355.7h1M732.5,327.1h1M732.5,298.5h1M732.5,269.9h1M732.5,241.4h1M732.5,212.8h1M732.5,184.2h1M789.7,727.3h1M789.7,670.1h1M789.7,641.5h1M789.7,612.9h1M789.7,584.4h1M789.7,555.8h1M789.7,527.2h1M789.7,498.6h1M789.7,470.0h1M789.7,441.4h1M789.7,384.3h1M789.7,355.7h1M789.7,327.1h1M789.7,298.5h1M789.7,269.9h1M789.7,241.4h1M789.7,212.8h1M789.7,184.2h1M818.3,727.3h1M818.3,670.1h1M818.3,641.5h1M818.3,612.9h1M818.3,584.4h1M818.3,555.8h1M818.3,527.2h1M818.3,498.6h1M818.3,470.0h1M818.3,441.4h1M818.3,384.3h1M818.3,355.7h1M818.3,327.1h1M818.3,298.5h1M818.3,269.9h1M818.3,241.4h1M818.3,212.8h1M818.3,184.2h1M846.9,727.3h1M846.9,670.1h1M846.9,641.5h1M846.9,612.9h1M846.9,584.4h1M846.9,555.8h1M846.9,527.2h1M846.9,498.6h1M846.9,470.0h1M846.9,441.4h1M846.9,384.3h1M846.9,355.7h1M846.9,327.1h1M846.9,298.5h1M846.9,269.9h1M846.9,241.4h1M846.9,212.8h1M846.9,184.2h1M875.5,727.3h1M875.5,670.1h1M875.5,641.5h1M875.5,612.9h1M875.5,584.4h1M875.5,555.8h1M875.5,527.2h1M875.5,498.6h1M875.5,470.0h1M875.5,441.4h1M875.5,384.3h1M875.5,355.7h1M875.5,327.1h1M875.5,298.5h1M875.5,269.9h1M875.5,241.4h1M875.5,212.8h1M875.5,184.2h1M904.0,727.3h1M904.0,670.1h1M904.0,641.5h1M904.0,612.9h1M904.0,584.4h1M904.0,555.8h1M904.0,527.2h1M904.0,498.6h1M904.0,470.0h1M904.0,441.4h1M904.0,384.3h1M904.0,355.7h1M904.0,327.1h1M904.0,298.5h1M904.0,269.9h1M904.0,241.4h1M904.0,212.8h1M904.0,184.2h1M932.6,727.3h1M932.6,670.1h1M932.6,641.5h1M932.6,612.9h1M932.6,584.4h1M932.6,555.8h1M932.6,527.2h1M932.6,498.6h1M932.6,470.0h1M932.6,441.4h1M932.6,384.3h1M932.6,355.7h1M932.6,327.1h1M932.6,298.5h1M932.6,269.9h1M932.6,241.4h1M932.6,212.8h1M932.6,184.2h1M961.2,727.3h1M961.2,670.1h1M961.2,641.5h1M961.2,612.9h1M961.2,584.4h1M961.2,555.8h1M961.2,527.2h1M961.2,498.6h1M961.2,470.0h1M961.2,441.4h1M961.2,384.3h1M961.2,355.7h1M961.2,327.1h1M961.2,298.5h1M961.2,269.9h1M961.2,241.4h1M961.2,212.8h1M961.2,184.2h1M989.8,727.3h1M989.8,670.1h1M989.8,641.5h1M989.8,612.9h1M989.8,584.4h1M989.8,555.8h1M989.8,527.2h1M989.8,498.6h1M989.8,470.0h1M989.8,441.4h1M989.8,384.3h1M989.8,355.7h1M989.8,327.1h1M989.8,298.5h1M989.8,269.9h1M989.8,241.4h1M989.8,212.8h1M989.8,184.2h1M1018.4,727.3h1M1018.4,670.1h1M1018.4,641.5h1M1018.4,612.9h1M1018.4,584.4h1M1018.4,555.8h1M1018.4,527.2h1M1018.4,498.6h1M1018.4,470.0h1M1018.4,441.4h1M1018.4,384.3h1M1018.4,355.7h1M1018.4,327.1h1M1018.4,298.5h1M1018.4,269.9h1M1018.4,241.4h1M1018.4,212.8h1M1018.4,184.2h1M1075.5,727.3h1M1075.5,670.1h1M1075.5,641.5h1M1075.5,612.9h1M1075.5,584.4h1M1075.5,555.8h1M1075.5,527.2h1M1075.5,498.6h1M1075.5,470.0h1M1075.5,441.4h1M1075.5,384.3h1M1075.5,355.7h1M1075.5,327.1h1M1075.5,298.5h1M1075.5,269.9h1M1075.5,241.4h1M1075.5,212.8h1M1075.5,184.2h1M1104.1,727.3h1M1104.1,670.1h1M1104.1,641.5h1M1104.1,612.9h1M1104.1,584.4h1M1104.1,555.8h1M1104.1,527.2h1M1104.1,498.6h1M1104.1,470.0h1M1104.1,441.4h1M1104.1,384.3h1M1104.1,355.7h1M1104.1,327.1h1M1104.1,298.5h1M1104.1,269.9h1M1104.1,241.4h1M1104.1,212.8h1M1104.1,184.2h1M1132.7,727.3h1M1132.7,670.1h1M1132.7,641.5h1M1132.7,612.9h1M1132.7,584.4h1M1132.7,555.8h1M1132.7,527.2h1M1132.7,498.6h1M1132.7,470.0h1M1132.7,441.4h1M1132.7,384.3h1M1132.7,355.7h1M1132.7,327.1h1M1132.7,298.5h1M1132.7,269.9h1M1132.7,241.4h1M1132.7,212.8h1M1132.7,184.2h1" stroke="#3a3a3a" stroke-width="1" fill="none"/><g clip-path="url(#dw)" fill="none" stroke-linejoin="round"><path d="M603.5,309.9 L604.0,301.8 L599.4,301.3 L599.9,299.3 L591.9,289.9 L509.8,280.7 L507.3,301.3 L566.2,308.4 L567.2,309.9 L597.9,312.9 L597.4,318.4 L568.2,315.4 L567.7,313.9 L504.8,306.3 L503.2,318.9 M602.0,310.4 L619.1,311.9 L618.1,326.5 L601.0,324.5 L602.0,310.4 M620.0,303.8 L612.0,302.8 L611.5,310.4 M607.0,269.6 L607.5,274.1 L616.6,275.1 L616.1,284.7 L620.0,285.2 M445.9,379.8 L475.0,383.3 M538.5,342.2 L620.0,351.6 M620.0,373.2 L586.9,369.7 L583.8,381.3 L584.8,381.8 L581.8,395.4 M470.0,382.8 L620.0,401.4 M572.2,394.4 L570.7,408.5 M548.6,397.4 L561.2,398.9 L560.7,406.5 L554.1,406.0 L551.1,425.0 M548.1,403.0 L550.6,403.5 L547.6,425.0 M479.1,389.4 L491.7,390.4 L490.7,398.9 L484.6,398.4 L481.6,425.0 M615.6,400.4 L614.6,410.5 L620.0,411.5 M615.1,410.5 L612.0,425.0 M618.1,411.7 L620.0,412.1 L618.6,425.0 M413.6,429.6 L475.0,436.6 M482.1,420.0 L480.1,431.1 L546.6,439.6 L549.6,420.0 M552.6,420.0 L550.6,439.1 L615.1,447.2 L618.1,420.0 M470.0,435.1 L620.0,453.7 M620.0,460.3 L489.9,490.0 M490.0,489.9 L480.0,491.6 L470.0,493.6 L461.0,496.0 L453.5,498.8 L447.5,502.4 L442.5,506.8 L438.5,511.5 M587.9,489.5 L620.0,492.5 M611.0,492.5 L610.0,500.6 M620.0,503.6 L591.9,500.6 L590.9,505.0 M405.6,502.0 L421.7,507.6 M610.0,500.0 L611.0,502.5 L592.4,501.0 L589.9,519.1 L602.0,520.7 L600.5,535.3 L620.0,537.8 M620.0,505.5 L607.0,504.0 L606.0,511.6 L620.0,513.1 M491.7,585.0 L493.2,580.6 L497.7,578.1 L560.7,582.1 L620.0,584.4 M491.2,589.2 L492.7,582.2 L494.7,579.6 L498.2,578.3 L620.0,586.2 M598.9,590.2 L620.0,592.2 M607.3,269.6 L607.3,273.9 L616.5,274.4 L616.0,285.1 L623.5,285.6 L622.9,296.3 L632.0,297.5 L640.5,297.3 L645.9,296.1 L650.1,294.1 L669.3,279.2 L661.3,269.6 M669.3,269.6 L671.5,272.8 L674.1,270.5 L681.6,279.7 L694.4,270.1 M706.1,270.1 L682.7,287.7 L711.5,323.5 L705.6,327.0 L673.6,285.6 L653.3,300.5 L648.0,303.5 L642.7,305.3 L636.3,305.7 L629.9,304.8 L612.3,302.7 L611.2,310.1 M600.0,301.6 L604.3,302.1 L603.7,310.1 M602.7,310.7 L619.7,312.3 L617.6,326.7 L601.1,324.5 L602.7,310.7 M741.3,269.6 L760.0,295.2 M747.7,269.6 L760.0,285.6 M750.0,272.8 L760.7,285.1 L770.3,304.8 L774.0,324.0 L775.6,339.5 L778.3,336.3 L814.5,339.5 L816.7,333.4 L834.3,334.7 L834.3,339.5 M750.0,280.8 L759.6,295.2 L767.1,313.3 L769.7,329.3 L769.2,350.0 M829.5,334.1 L834.3,294.7 L817.7,292.9 L815.6,309.6 L819.3,310.1 L816.7,333.4 M857.2,285.6 L881.2,288.6 L879.6,313.3 L854.5,311.0 L857.2,285.6 M867.3,285.6 L868.9,279.7 L894.5,282.7 M881.7,285.6 L894.0,286.7 M879.6,308.5 L884.4,309.3 L883.3,321.9 L869.5,320.3 L870.5,312.8 M863.6,312.3 L863.1,324.9 L875.9,326.1 L876.4,321.3 M875.9,326.1 L875.3,330.4 L883.3,336.8 L888.7,344.3 M884.4,315.5 L891.9,311.9 M891.3,270.1 L891.9,271.7 L897.7,272.6 L897.2,276.0 M895.1,282.9 L897.7,287.7 M600.0,349.4 L651.7,355.5 L647.5,386.9 M600.0,371.5 L624.5,374.1 L621.3,400.8 L600.0,398.1 M628.3,418.9 L631.5,386.7 L647.5,388.5 L643.7,419.5 L651.7,421.6 L650.7,430.0 M615.5,400.8 L629.9,402.4 M614.9,406.1 L628.8,407.2 M615.5,400.8 L611.7,430.0 M614.9,410.4 L618.7,410.9 L616.0,430.0 M732.8,427.5 L732.8,404.0 L737.1,371.8 L676.3,365.4 L670.4,422.7 L706.7,428.0 L706.7,430.0 M674.1,393.3 L685.3,394.4 L684.8,398.7 M673.1,397.4 L733.3,404.0 M708.3,400.8 L708.8,396.3 L715.7,397.1 L715.2,401.7 M721.1,402.4 L722.7,398.5 L733.3,399.7 M747.2,430.0 L760.0,426.9 M769.7,340.0 L759.6,421.1 M784.7,351.5 L800.7,353.0 L801.2,347.7 L810.8,349.1 L809.7,354.1 L800.1,353.0 M810.8,350.7 L838.5,353.3 L835.9,382.1 L782.5,377.3 L784.7,351.5 M853.5,358.1 L863.1,359.0 L862.5,357.6 L878.5,359.2 L877.5,369.3 L862.0,367.2 L863.1,359.0 M878.5,359.2 L883.9,359.7 L888.1,355.5 M853.5,358.1 L849.7,386.4 L874.8,389.6 L877.5,369.3 M875.9,386.4 L885.5,386.9 M886.5,340.0 L888.7,344.3 L888.1,355.5 L885.5,386.9 L882.3,421.1 M780.9,417.9 L782.0,412.5 L815.1,410.6 L815.3,416.3 M750.0,429.1 L771.3,425.3 L792.7,422.9 L814.0,421.9 L835.3,422.1 L867.3,424.8 L898.8,428.5 M651.8,420.6 L648.9,441.3 L651.2,446.7 M670.2,422.4 L707.5,428.3 L706.9,432.4 M732.4,420.0 L733.0,427.1 M587.3,489.9 L735.0,505.3 M720.5,452.0 L724.1,455.0 L722.9,462.1 L735.0,463.8 M722.9,462.1 L721.7,465.0 L711.1,464.4 L708.7,482.8 L712.8,483.4 L714.0,485.8 L735.0,489.3 M730.0,433.6 L749.0,429.2 L767.9,425.3 L789.2,423.3 L812.9,422.4 L848.5,423.6 L898.2,428.3 M730.0,463.8 L741.8,465.6 L742.8,459.7 L775.0,462.1 L775.6,455.5 L773.8,455.0 L774.4,447.8 L807.0,443.7 L807.6,437.2 M775.6,451.4 L801.1,453.8 L797.5,480.4 L794.6,480.7 L793.4,490.5 L746.6,486.4 L746.0,489.3 L730.0,487.3 M759.6,460.9 L756.3,486.9 M811.8,437.2 L814.1,454.4 L818.9,459.1 L829.5,461.5 M823.6,437.2 L824.8,449.6 L830.7,453.2 M830.1,437.8 L831.7,448.4 L837.2,449.0 L838.4,438.0 M831.7,448.4 L867.4,454.4 L862.1,484.0 L845.5,480.2 L846.1,478.6 L826.9,474.3 L830.7,453.2 M887.6,449.0 L898.2,450.2 M898.2,482.2 L894.1,486.4 L898.2,490.9 M898.2,511.2 L892.9,516.0 L895.9,520.0 M898.2,506.5 L882.8,504.7 L877.5,520.0 M560.0,581.8 L735.0,594.1 M598.8,590.2 L629.5,592.7 L629.2,598.1 L639.1,599.5 L634.3,587.2 M673.1,618.6 L673.8,598.8 L640.4,596.8 L639.7,602.9 L690.8,606.6 M668.4,605.0 L666.3,618.6 M702.4,596.5 L708.3,600.9 L707.9,611.8 L702.4,616.1 L697.0,611.8 L697.7,600.9 L702.4,596.5 M735.0,603.6 L730.4,610.4 L727.6,611.1 L724.2,618.6 M731.7,609.0 L727.0,618.6 M805.6,579.7 L812.5,580.4 L811.5,589.3 L804.3,588.6 L805.6,579.7 M880.6,515.0 L877.9,545.7 L897.6,548.4 M892.2,516.4 L899.0,523.9 M899.0,560.7 L885.4,567.5 L897.6,581.1 M897.0,561.3 L897.6,564.1 M884.7,617.9 L899.0,618.9 M730.0,593.4 L744.3,594.7 L761.1,597.5 L759.3,618.6 M744.3,595.4 L743.6,604.3 M730.0,610.4 L732.0,604.3 L760.7,606.3 M780.4,589.3 L777.0,618.6 M730.0,507.1 L824.8,516.0 M611.3,492.6 L610.4,502.4 M625.3,494.0 L622.5,513.1 M592.2,501.3 L620.7,504.7 L619.7,512.7 M606.7,503.3 L605.7,511.7 L633.7,514.7 L632.3,526.2 L629.1,526.2 L627.7,538.6 L600.1,535.5 L601.5,520.6 L589.9,519.2 L592.2,501.3 M642.6,487.0 L642.1,500.5 L666.9,503.8 L665.5,517.3 L673.4,518.3 L672.5,524.3 L700.0,527.6 M665.5,517.3 L664.5,523.4 L654.7,522.9 L652.4,542.1 L664.1,543.9 L664.5,541.6 L669.7,542.1 L668.3,554.2 L679.9,555.6 L682.7,525.7 M703.3,506.3 L701.3,527.0 L714.0,528.3 L716.0,513.7 L739.3,517.0 L738.9,519.0 L746.0,519.7 L746.7,511.7 L760.0,513.0 M746.0,519.7 L758.0,521.7 L756.0,536.3 L752.7,542.3 L734.0,540.3 L733.3,545.7 L708.7,543.0 L710.7,529.0 M723.3,543.7 L724.7,533.7 L756.0,537.0 M773.3,513.3 L824.1,517.1 L820.9,545.5 L834.4,546.5 M773.3,513.3 L772.3,516.1 L776.5,519.9 L815.7,526.9 L813.9,543.7 L793.8,540.9 L792.4,553.9 L777.9,551.1 L777.5,554.4 L770.0,553.5 L767.3,552.8 L757.3,552.3 M776.5,519.9 L774.2,533.9 L770.0,533.4 L767.3,552.8 M799.4,522.5 L807.3,523.1 L806.9,525.9 L799.4,525.3 L799.4,522.5 M836.7,525.5 L876.4,530.6 M836.7,525.5 L834.4,546.5 L831.1,546.5 L830.7,556.3 L840.5,557.7 L841.4,551.6 L854.9,553.5 L855.9,548.3 L875.0,549.3 M834.9,532.5 L826.5,532.5 L825.1,545.5 M861.0,529.2 L861.9,532.5 L867.1,532.7 L868.0,530.1 M868.5,549.7 L868.0,556.7 L874.5,558.1 L875.0,549.7" stroke="#ececec" stroke-width=".72"/><path d="M440.3,498.6 L465.3,489.5 L475.0,487.0 M488.1,505.0 L520.4,497.4 L543.3,492.0 M438.3,517.9 L456.3,536.5 L475.0,564.5 M480.6,507.1 L510.3,500.0 M576.8,560.0 L575.1,570.1 M581.1,515.0 L575.3,570.9 M560.0,573.6 L570.9,574.3" stroke="#c8b0b0" stroke-width=".6"/><path d="M494.7,318.2 L620.0,332.5 M413.6,431.6 L475.0,438.6 M470.0,437.9 L620.0,454.8 L491.7,483.5 M595.9,480.9 L620.0,484.5 M614.1,475.4 L620.0,474.4 M575.1,574.2 L620.0,577.6 M634.1,269.8 L628.3,334.1 M600.0,330.4 L664.0,337.9 L664.7,329.3 L760.0,340.0 M664.0,337.9 L662.4,350.0 M785.7,269.6 L775.6,350.0 M842.6,269.6 L834.8,334.7 M850.3,270.1 L897.7,276.0 L888.7,344.3 L888.1,350.0 M895.1,282.9 L898.8,280.3 M834.8,334.7 L897.7,346.2 M842.8,336.3 L841.7,350.0 M898.3,338.4 L897.2,350.0 M750.0,338.9 L767.6,341.1 L766.0,350.0 M663.8,340.0 L653.1,430.0 M760.0,399.7 L757.9,422.1 L721.6,430.0 M757.5,340.0 L768.7,341.1 M767.1,340.0 L758.0,422.1 M777.9,340.0 L767.6,420.0 M842.8,340.0 L836.2,417.3 M864.1,340.0 L897.7,345.9 M898.8,340.0 L890.3,422.7 M750.0,423.7 L766.0,420.7 L782.0,418.1 L798.0,416.8 L814.0,416.3 L836.2,417.3 L867.3,420.0 L898.8,422.7 M560.0,467.4 L618.1,453.8 L735.0,426.5 M613.9,475.7 L735.0,446.7 M654.8,420.0 L651.2,446.7 M595.5,481.4 L613.9,483.4 L735.0,495.8 M642.3,486.9 L639.4,520.0 M702.8,492.9 L699.8,520.0 M730.0,428.3 L771.5,420.0 M867.4,420.0 L898.2,422.4 M730.0,449.0 L750.1,444.3 L771.5,440.1 L789.2,438.0 L810.6,436.6 L848.5,438.0 L898.2,443.1 M810.6,436.6 L803.7,503.9 M730.0,495.8 L803.7,503.9 L879.9,512.2 M887.6,442.5 L878.7,520.0 M761.4,499.4 L759.6,520.0 M821.8,505.9 L820.6,520.0 M640.4,515.0 L633.6,578.4 M700.4,515.0 L690.6,618.6 M579.8,574.6 L735.0,585.2 M760.7,515.0 L753.2,586.6 M820.6,515.0 L812.5,590.0 M879.9,515.0 L871.7,595.4 L869.0,618.6 M730.0,585.2 L871.7,595.4 M785.9,589.3 L782.5,618.6 M878.6,521.8 L899.0,524.5 M872.4,579.1 L897.6,581.4" stroke="#10e6e6" stroke-width=".85"/><path d="M471.5,334.1 L515.0,339.2 M471.5,337.3 L515.0,343.0 M536.2,327.2 L584.3,332.7 L582.8,345.0 M536.2,327.2 L534.5,341.4 M471.8,334.0 L534.5,341.4 M470.0,337.6 L530.4,344.6 M490.1,340.0 L513.1,342.2 L558.1,347.6 M517.3,343.0 L554.6,347.6 M558.1,346.5 L557.4,355.6 L581.6,356.9 L583.1,344.8 L583.3,340.0 M470.0,356.6 L485.1,357.9 L483.6,371.4 L482.1,382.3 M517.3,361.4 L554.6,366.0 L553.1,379.6 L551.6,390.4 M517.3,361.4 L513.1,379.8 L512.3,385.3 M406.1,462.3 L441.9,467.3 L475.0,469.4 M406.1,462.3 L404.9,477.4 L404.6,490.0 M410.3,431.1 L408.1,447.0 L406.1,462.3 M411.4,423.0 L475.0,430.1 M470.0,469.4 L486.3,469.9 M476.9,487.0 L488.4,484.5 M543.3,492.0 L564.5,487.0 L583.3,489.5 L581.8,505.0 M543.3,492.0 L546.1,500.1 L547.6,505.0 M460.0,516.6 L475.0,507.6 M460.0,516.6 L455.5,526.4 L456.3,536.5 M524.4,505.2 L547.6,508.1 M524.4,505.2 L522.9,518.1 L521.4,530.7 M521.4,530.7 L557.6,535.3 M572.0,505.8 L570.0,524.4 M570.0,528.2 L579.6,529.7 M582.3,500.0 L581.6,509.6 L579.6,530.7 L575.1,574.2 M476.2,568.0 L575.1,574.2" stroke="#e08c8c" stroke-width=".8"/><path d="M369.6,293.9 L449.4,301.8 M369.6,294.5 L449.4,302.3 M346.9,299.0 L432.7,308.1 M345.9,309.8 L421.0,316.4 M449.4,301.8 L466.9,269.9 M421.0,316.4 L413.3,337.0 L407.3,356.3 M372.1,269.9 L369.6,293.9 M360.5,269.9 L359.6,286.6 M332.0,290.4 L347.8,290.4 L349.3,284.1 L359.6,286.6 L370.6,286.9 M331.3,297.6 L339.9,297.6 L346.9,299.0 L345.9,309.8 L332.9,307.8 L331.3,297.6 M449.4,301.8 L446.6,308.1 M472.3,319.5 L471.5,334.1 M439.0,323.3 L421.3,352.5 M383.9,354.4 L406.1,357.5 M383.9,354.4 L382.6,365.0 M394.7,356.9 L390.9,365.0 M466.9,356.5 L485.2,357.8 L484.6,365.0 M513.3,274.1 L588.9,282.7 M485.1,269.9 L483.8,279.4 M494.0,293.2 L493.2,307.0 M480.6,300.3 L480.1,304.3 M472.2,318.4 L472.5,325.3 L471.8,334.0 M332.9,379.6 L379.9,385.0 M332.9,390.4 L392.7,397.9 M348.4,407.0 L391.5,411.0 M348.0,414.0 L379.4,416.6 L378.4,425.0 M348.0,414.0 L347.2,425.0 M383.9,354.6 L379.9,385.0 M383.9,354.6 L394.5,357.1 M398.0,346.2 L396.5,353.1 M394.5,357.1 L391.5,365.2 M426.7,342.5 L415.7,363.2 M402.4,372.4 L399.2,381.3 L396.1,389.4 M412.4,369.4 L410.4,377.0 L408.1,384.3 L406.1,392.1 L404.6,399.1 M422.2,372.4 L419.5,381.3 L416.7,389.9 L415.2,398.6 L413.1,407.5 L412.1,415.0 L411.1,424.1 M424.5,392.4 L423.2,404.5 L422.2,413.5 M432.6,377.5 L432.3,385.5 L430.3,392.9 M402.4,412.3 L401.6,425.0 M446.7,420.6 L470.6,420.6 M474.1,394.4 L473.1,407.7 L472.1,416.6 M447.4,353.1 L443.4,371.5 L443.1,378.8 M474.5,396.4 L473.5,407.7 L472.0,420.6 M480.6,397.4 L478.6,413.0 L477.1,425.0 M494.5,404.5 L493.2,412.5 L491.7,422.6 M544.5,405.5 L543.0,416.1 L542.0,425.0 M564.2,411.5 L562.5,420.6 L562.2,425.0 M502.0,388.4 L502.0,393.6 L501.2,399.4 M347.2,420.0 L346.0,439.4 M379.9,420.0 L377.4,442.0 M401.6,420.0 L400.0,433.6 L397.0,454.8 L395.5,472.6 L393.8,489.3 M332.9,488.5 L385.4,496.4 M332.9,489.1 L385.4,497.0 M344.1,502.1 L369.8,505.0 M346.0,439.4 L377.4,442.0 M376.4,452.4 L397.0,454.8 M353.7,448.7 L368.1,449.7 M441.9,467.3 L441.3,480.2 L440.3,493.0 M404.6,491.5 L440.3,493.0 M486.3,469.9 L488.4,484.5 M516.3,428.6 L540.5,428.6 M516.1,435.9 L539.8,438.3 M586.1,436.6 L609.8,436.6 M585.6,444.0 L609.3,446.4 M560.2,432.6 L562.7,421.5 M344.1,502.2 L385.4,510.1 M344.1,502.8 L385.4,510.7 M400.4,514.1 L402.1,585.0 M401.6,512.6 L418.2,522.7 L438.8,541.3 L456.0,563.5 L470.1,582.1 M411.4,571.3 L447.4,568.8 M411.4,571.3 L399.5,585.0 M411.4,571.3 L409.9,581.4 M456.3,536.5 L461.5,546.8 L475.0,568.0 M470.0,559.4 L476.2,568.0 L484.4,579.6 L488.1,585.0 M411.4,571.4 L380.6,602.8 L377.9,618.6 M411.4,571.4 L409.9,581.5 L409.4,602.3 L407.4,612.1 L425.2,614.9 M411.6,589.5 L427.8,592.2 L439.3,597.5 M411.6,592.2 L425.2,595.1 L439.3,598.8 M439.3,597.5 L437.3,607.1 L436.3,616.4 M444.9,595.5 L442.9,606.5 L440.8,616.4 M450.4,593.7 L448.4,606.1 L446.4,618.4 M450.4,593.7 L456.0,584.7 L470.1,582.4 M476.2,568.1 L511.8,618.4 M470.0,586.2 L475.0,591.2 L494.5,618.7 M573.3,594.6 L571.7,613.4 M591.4,617.9 L608.8,618.6 M594.9,592.2 L594.9,602.3 M583.7,489.3 L581.7,509.7 L580.1,520.0 M564.5,486.9 L583.7,489.3 M572.2,506.1 L570.7,515.4" stroke="#cc2424" stroke-width=".9"/></g><g font-family="DejaVu Sans Light, DejaVu Sans, Liberation Sans, sans-serif" font-weight="200" stroke-width=".2"><text x="422.3" y="360.5" font-size="9.2" fill="#cc1818" stroke="#cc1818" transform="rotate(-60 422.3 360.5)" textLength="48" lengthAdjust="spacingAndGlyphs">Dolorum</text><text x="349.2" y="464.8" font-size="7.8" fill="#cc1818" stroke="#cc1818" textLength="19" lengthAdjust="spacingAndGlyphs">2536</text><text x="448.9" y="458.8" font-size="7.8" fill="#cc1818" stroke="#cc1818" textLength="17" lengthAdjust="spacingAndGlyphs">1509</text><text x="400.0" y="449.2" font-size="6.3" fill="#cc1818" stroke="#cc1818">51</text><text x="580.8" y="463.3" font-size="7.8" fill="#e07a10" stroke="#e07a10" textLength="38.3" lengthAdjust="spacingAndGlyphs">52563692</text><text x="386.4" y="516.1" font-size="7.6" fill="#cc1818" stroke="#cc1818" textLength="36.8" lengthAdjust="spacingAndGlyphs">52562236</text><text x="489.1" y="544.3" font-size="7.8" fill="#cc1818" stroke="#cc1818" textLength="16.6" lengthAdjust="spacingAndGlyphs">1703</text><text x="599.4" y="559.9" font-size="7.8" fill="#e4e400" stroke="#e4e400" textLength="16.4" lengthAdjust="spacingAndGlyphs">1705</text><text x="465.5" y="616.4" font-size="6.9" fill="#cc1818" stroke="#cc1818">18</text><text x="473.0" y="579.6" font-size="9.7" fill="#cc1818" stroke="#cc1818" transform="rotate(55.5 473.0 579.6)" textLength="64" lengthAdjust="spacingAndGlyphs">Minim veniam</text><text x="550.1" y="608.9" font-size="7.8" fill="#cc1818" stroke="#cc1818">555</text><text x="465.2" y="617.4" font-size="7.8" fill="#cc1818" stroke="#cc1818" textLength="16.8" lengthAdjust="spacingAndGlyphs">1803</text><text x="718.4" y="298.9" font-size="7.8" fill="#e4e400" stroke="#e4e400" textLength="14.6" lengthAdjust="spacingAndGlyphs">445</text><text x="641.6" y="350.5" font-size="7.8" fill="#e4e400" stroke="#e4e400" textLength="14.6" lengthAdjust="spacingAndGlyphs">548</text><text x="841.9" y="327.2" font-size="7.8" fill="#e4e400" stroke="#e4e400" textLength="19" lengthAdjust="spacingAndGlyphs">2360</text><text x="707.7" y="359.0" font-size="7.8" fill="#e4e400" stroke="#e4e400" textLength="16.4" lengthAdjust="spacingAndGlyphs">1931</text><text x="855.1" y="409.3" font-size="7.8" fill="#e4e400" stroke="#e4e400" textLength="16.4" lengthAdjust="spacingAndGlyphs">1614</text><text x="673.5" y="456.1" font-size="9.7" fill="#bcbcbc" stroke="#bcbcbc" transform="rotate(-14.5 673.5 456.1)" textLength="63" lengthAdjust="spacingAndGlyphs">Magna Aliqua</text><text x="626.4" y="468.6" font-size="7.8" fill="#e4e400" stroke="#e4e400" transform="rotate(-14.5 626.4 468.6)" textLength="25" lengthAdjust="spacingAndGlyphs">43505</text><text x="664.3" y="479.8" font-size="7.8" fill="#e4e400" stroke="#e4e400" textLength="16.4" lengthAdjust="spacingAndGlyphs">1612</text><text x="703.6" y="501.8" font-size="9.4" fill="#a8a8a8" stroke="#a8a8a8" transform="rotate(6.8 703.6 501.8)" textLength="53" lengthAdjust="spacingAndGlyphs">Laboris Nisi</text><text x="773.2" y="431.3" font-size="7.8" fill="#e07a10" stroke="#e07a10" textLength="38" lengthAdjust="spacingAndGlyphs">52563693</text><text x="853.2" y="432.8" font-size="7.8" fill="#e07a10" stroke="#e07a10" transform="rotate(2 853.2 432.8)" textLength="38" lengthAdjust="spacingAndGlyphs">52563694</text><text x="836.6" y="497.0" font-size="7.8" fill="#e4e400" stroke="#e4e400" textLength="16.4" lengthAdjust="spacingAndGlyphs">1810</text><text x="882.3" y="500.6" font-size="7.8" fill="#e4e400" stroke="#e4e400" textLength="19" lengthAdjust="spacingAndGlyphs">2506</text><text x="656.1" y="568.8" font-size="7.8" fill="#e4e400" stroke="#e4e400" textLength="16.4" lengthAdjust="spacingAndGlyphs">1706</text><text x="719.5" y="568.2" font-size="7.8" fill="#e4e400" stroke="#e4e400" textLength="16.4" lengthAdjust="spacingAndGlyphs">1707</text><text x="776.3" y="575.0" font-size="7.8" fill="#e4e400" stroke="#e4e400" textLength="16.4" lengthAdjust="spacingAndGlyphs">1708</text><text x="836.3" y="577.0" font-size="7.8" fill="#e4e400" stroke="#e4e400" textLength="14.6" lengthAdjust="spacingAndGlyphs">552</text><text x="877.2" y="560.7" font-size="7.8" fill="#e4e400" stroke="#e4e400" textLength="14.6" lengthAdjust="spacingAndGlyphs">550</text></g><g><rect class="hr" x="357.5" y="266.9"/><rect class="hb" x="369.1" y="266.9"/><rect class="ht" x="356.6" y="275.1"/><rect class="ht" x="367.9" y="278.5"/><rect class="hb" x="329.0" y="287.4"/><rect class="ht" x="334.4" y="287.8"/><rect class="ht" x="339.7" y="287.8"/><rect class="ht" x="344.8" y="287.4"/><rect class="hb" x="346.3" y="281.1"/><rect class="ht" x="348.0" y="284.9"/><rect class="ht" x="351.4" y="283.0"/><rect class="hb" x="356.6" y="283.6"/><rect class="ht" x="361.5" y="284.0"/><rect class="hb" x="367.6" y="283.9"/><rect class="ht" x="367.0" y="287.4"/><rect class="hb" x="366.6" y="290.9"/><rect class="hb" x="328.3" y="294.6"/><rect class="ht" x="332.4" y="294.7"/><rect class="hb" x="336.9" y="294.6"/><rect class="hr" x="343.9" y="296.0"/><rect class="ht" x="334.7" y="299.8"/><rect class="ht" x="343.3" y="301.7"/><rect class="hr" x="329.9" y="304.8"/><rect class="ht" x="334.0" y="305.5"/><rect class="ht" x="337.6" y="305.8"/><rect class="hb" x="342.9" y="306.8"/><rect class="hb" x="348.0" y="290.2"/><rect class="ht" x="406.4" y="295.0"/><rect class="hb" x="446.4" y="298.8"/><rect class="ht" x="387.0" y="301.0"/><rect class="hb" x="429.7" y="305.1"/><rect class="ht" x="364.2" y="308.6"/><rect class="ht" x="385.6" y="310.2"/><rect class="ht" x="402.1" y="311.5"/><rect class="hb" x="418.0" y="313.4"/><rect class="ht" x="455.2" y="283.0"/><rect class="hb" x="463.9" y="266.9"/><rect class="ht" x="414.2" y="323.8"/><rect class="hb" x="410.3" y="334.0"/><rect class="ht" x="408.8" y="340.6"/><rect class="ht" x="433.5" y="307.0"/><rect class="hb" x="437.5" y="308.7"/><rect class="ht" x="441.7" y="307.7"/><rect class="ht" x="449.7" y="309.6"/><rect class="ht" x="452.5" y="312.7"/><rect class="ht" x="459.0" y="312.1"/><rect class="hb" x="463.6" y="312.4"/><rect class="ht" x="468.9" y="312.7"/><rect class="ht" x="437.0" y="313.4"/><rect class="hb" x="436.6" y="318.4"/><rect class="ht" x="446.8" y="318.4"/><rect class="hb" x="452.8" y="318.8"/><rect class="hb" x="445.5" y="322.2"/><rect class="ht" x="431.2" y="326.0"/><rect class="ht" x="469.3" y="322.2"/><rect class="hb" x="468.5" y="331.1"/><rect class="ht" x="439.2" y="332.0"/><rect class="hb" x="449.3" y="331.1"/><rect class="ht" x="454.4" y="332.7"/><rect class="ht" x="448.4" y="334.9"/><rect class="hb" x="446.1" y="338.1"/><rect class="ht" x="425.9" y="335.3"/><rect class="hb" x="430.3" y="336.4"/><rect class="ht" x="436.6" y="337.1"/><rect class="ht" x="440.4" y="340.0"/><rect class="hr" x="433.2" y="343.5"/><rect class="ht" x="430.3" y="347.9"/><rect class="hb" x="444.6" y="350.5"/><rect class="ht" x="450.9" y="351.4"/><rect class="ht" x="444.2" y="355.8"/><rect class="hb" x="427.1" y="353.9"/><rect class="hb" x="415.7" y="353.5"/><rect class="ht" x="409.4" y="354.5"/><rect class="ht" x="403.1" y="358.3"/><rect class="ht" x="412.6" y="359.6"/><rect class="ht" x="423.3" y="360.2"/><rect class="ht" x="442.3" y="360.2"/><rect class="hr" x="395.2" y="343.4"/><rect class="ht" x="400.5" y="345.0"/><rect class="ht" x="406.2" y="347.2"/><rect class="hb" x="380.9" y="351.4"/><rect class="ht" x="391.7" y="353.9"/><rect class="ht" x="405.0" y="351.4"/><rect class="ht" x="472.5" y="353.5"/><rect class="hb" x="482.2" y="354.8"/><rect class="ht" x="499.7" y="334.9"/><rect class="ht" x="510.6" y="339.3"/><rect class="hr" x="459.0" y="334.3"/><rect class="hr" x="459.0" y="338.1"/><rect class="hr" x="459.0" y="341.9"/><rect class="hr" x="459.0" y="345.7"/><rect class="hr" x="459.0" y="348.8"/><rect class="hb" x="457.5" y="353.5"/><rect class="hb" x="463.2" y="353.9"/><rect class="hb" x="464.5" y="338.1"/><rect class="hr" x="482.1" y="266.9"/><rect class="hr" x="493.7" y="267.1"/><rect class="ht" x="499.7" y="267.1"/><rect class="hb" x="507.8" y="265.6"/><rect class="hb" x="507.8" y="271.1"/><rect class="ht" x="507.8" y="268.3"/><rect class="hr" x="480.8" y="276.4"/><rect class="ht" x="489.0" y="277.1"/><rect class="hb" x="494.2" y="277.1"/><rect class="ht" x="481.6" y="282.4"/><rect class="ht" x="493.4" y="281.7"/><rect class="hb" x="481.1" y="286.7"/><rect class="ht" x="487.1" y="286.2"/><rect class="hb" x="492.4" y="287.2"/><rect class="ht" x="479.1" y="290.2"/><rect class="ht" x="480.1" y="295.1"/><rect class="ht" x="491.0" y="295.8"/><rect class="ht" x="477.6" y="303.3"/><rect class="ht" x="484.3" y="303.3"/><rect class="hb" x="490.2" y="304.0"/><rect class="ht" x="489.0" y="309.7"/><rect class="ht" x="476.6" y="307.9"/><rect class="hr" x="476.1" y="310.2"/><rect class="hb" x="475.6" y="313.6"/><rect class="ht" x="482.9" y="314.4"/><rect class="hb" x="488.5" y="315.4"/><rect class="ht" x="469.2" y="312.9"/><rect class="ht" x="469.5" y="322.3"/><rect class="hb" x="468.8" y="331.0"/><rect class="ht" x="548.4" y="275.4"/><rect class="hr" x="597.3" y="266.9"/><rect class="ht" x="596.4" y="271.6"/><rect class="hb" x="597.5" y="275.1"/><rect class="ht" x="592.4" y="276.6"/><rect class="ht" x="599.0" y="278.4"/><rect class="hb" x="588.4" y="280.4"/><rect class="hr" x="594.7" y="282.2"/><rect class="hb" x="604.5" y="280.4"/><rect class="ht" x="605.0" y="286.4"/><rect class="ht" x="595.4" y="287.7"/><rect class="hb" x="600.0" y="289.7"/><rect class="hb" x="533.2" y="324.2"/><rect class="ht" x="557.4" y="326.8"/><rect class="hb" x="581.3" y="329.7"/><rect class="ht" x="532.5" y="331.0"/><rect class="hb" x="531.5" y="338.4"/><rect class="ht" x="499.7" y="335.1"/><rect class="ht" x="510.1" y="339.1"/><rect class="ht" x="580.3" y="340.6"/><rect class="hb" x="329.9" y="376.6"/><rect class="ht" x="353.7" y="379.3"/><rect class="hb" x="376.9" y="382.0"/><rect class="hb" x="380.9" y="382.0"/><rect class="hr" x="329.9" y="387.4"/><rect class="ht" x="359.8" y="391.4"/><rect class="hb" x="389.7" y="394.9"/><rect class="hr" x="345.4" y="404.0"/><rect class="ht" x="367.5" y="406.0"/><rect class="hb" x="388.5" y="408.0"/><rect class="hr" x="345.0" y="411.0"/><rect class="ht" x="360.8" y="412.4"/><rect class="hb" x="376.4" y="413.6"/><rect class="ht" x="344.0" y="421.6"/><rect class="hb" x="380.9" y="351.6"/><rect class="ht" x="379.4" y="366.5"/><rect class="hr" x="395.0" y="343.2"/><rect class="ht" x="400.6" y="345.1"/><rect class="ht" x="406.1" y="347.1"/><rect class="ht" x="408.8" y="341.0"/><rect class="ht" x="391.5" y="354.1"/><rect class="ht" x="403.1" y="358.2"/><rect class="ht" x="401.6" y="362.2"/><rect class="ht" x="409.6" y="354.1"/><rect class="hb" x="415.7" y="353.4"/><rect class="hb" x="427.1" y="353.6"/><rect class="ht" x="430.3" y="348.6"/><rect class="hr" x="433.3" y="343.5"/><rect class="ht" x="412.2" y="360.2"/><rect class="ht" x="423.2" y="361.7"/><rect class="hb" x="387.0" y="365.2"/><rect class="ht" x="393.3" y="367.5"/><rect class="hb" x="399.4" y="369.4"/><rect class="hb" x="409.4" y="366.4"/><rect class="hb" x="419.2" y="369.4"/><rect class="ht" x="384.0" y="373.8"/><rect class="ht" x="396.2" y="378.3"/><rect class="ht" x="407.4" y="374.0"/><rect class="ht" x="416.5" y="378.3"/><rect class="hb" x="405.1" y="381.3"/><rect class="hb" x="413.7" y="386.9"/><rect class="ht" x="387.3" y="384.3"/><rect class="hb" x="393.1" y="386.4"/><rect class="ht" x="403.1" y="389.1"/><rect class="hr" x="421.5" y="389.4"/><rect class="ht" x="395.7" y="395.4"/><rect class="hb" x="401.6" y="396.1"/><rect class="ht" x="412.2" y="395.6"/><rect class="ht" x="389.3" y="401.5"/><rect class="hb" x="394.7" y="402.5"/><rect class="ht" x="400.6" y="403.0"/><rect class="hb" x="410.1" y="404.5"/><rect class="ht" x="394.0" y="408.7"/><rect class="hb" x="399.4" y="409.3"/><rect class="ht" x="420.2" y="401.5"/><rect class="ht" x="409.1" y="412.0"/><rect class="ht" x="408.6" y="416.6"/><rect class="hb" x="408.1" y="421.1"/><rect class="hb" x="444.4" y="350.1"/><rect class="ht" x="450.9" y="351.1"/><rect class="ht" x="443.9" y="356.1"/><rect class="ht" x="442.4" y="361.7"/><rect class="ht" x="440.4" y="368.5"/><rect class="hb" x="429.6" y="374.5"/><rect class="ht" x="434.6" y="375.3"/><rect class="hb" x="440.1" y="375.8"/><rect class="ht" x="429.3" y="382.5"/><rect class="ht" x="427.3" y="389.9"/><rect class="hb" x="429.8" y="390.4"/><rect class="ht" x="427.3" y="396.4"/><rect class="ht" x="427.8" y="402.5"/><rect class="ht" x="428.3" y="408.3"/><rect class="hb" x="418.2" y="413.3"/><rect class="ht" x="423.2" y="413.8"/><rect class="hb" x="428.3" y="414.6"/><rect class="ht" x="435.6" y="416.6"/><rect class="hr" x="443.7" y="417.6"/><rect class="ht" x="449.9" y="416.6"/><rect class="ht" x="459.0" y="417.3"/><rect class="hb" x="467.6" y="417.6"/><rect class="ht" x="471.1" y="353.6"/><rect class="ht" x="471.1" y="381.3"/><rect class="hb" x="471.1" y="391.4"/><rect class="ht" x="470.1" y="404.7"/><rect class="hb" x="430.3" y="338.0"/><rect class="ht" x="436.3" y="338.5"/><rect class="ht" x="440.4" y="341.0"/><rect class="hb" x="446.4" y="338.0"/><rect class="ht" x="510.1" y="339.2"/><rect class="hb" x="531.5" y="338.8"/><rect class="hb" x="555.1" y="343.5"/><rect class="ht" x="554.6" y="348.1"/><rect class="hb" x="554.4" y="352.6"/><rect class="ht" x="580.1" y="341.8"/><rect class="ht" x="566.7" y="352.6"/><rect class="hb" x="578.6" y="353.9"/><rect class="ht" x="472.5" y="353.6"/><rect class="hb" x="482.1" y="354.9"/><rect class="ht" x="480.6" y="368.4"/><rect class="hr" x="514.3" y="358.4"/><rect class="ht" x="533.0" y="360.9"/><rect class="hb" x="551.6" y="363.0"/><rect class="ht" x="513.5" y="364.4"/><rect class="ht" x="512.1" y="369.7"/><rect class="ht" x="510.1" y="376.8"/><rect class="ht" x="550.1" y="376.6"/><rect class="hb" x="471.5" y="379.8"/><rect class="ht" x="476.6" y="381.3"/><rect class="hb" x="480.6" y="381.8"/><rect class="ht" x="473.0" y="383.5"/><rect class="ht" x="472.0" y="386.9"/><rect class="hb" x="470.5" y="391.4"/><rect class="ht" x="475.1" y="391.7"/><rect class="hb" x="479.1" y="392.2"/><rect class="hb" x="499.2" y="382.8"/><rect class="ht" x="504.5" y="383.3"/><rect class="hb" x="509.8" y="384.0"/><rect class="ht" x="499.0" y="390.6"/><rect class="hr" x="491.5" y="397.7"/><rect class="ht" x="496.2" y="397.9"/><rect class="hb" x="499.4" y="398.4"/><rect class="ht" x="497.2" y="404.5"/><rect class="ht" x="490.2" y="409.5"/><rect class="ht" x="497.7" y="410.5"/><rect class="ht" x="497.7" y="416.6"/><rect class="hb" x="487.7" y="420.4"/><rect class="ht" x="492.7" y="421.1"/><rect class="hb" x="497.7" y="421.1"/><rect class="ht" x="470.5" y="404.7"/><rect class="ht" x="475.6" y="410.0"/><rect class="hb" x="468.5" y="417.6"/><rect class="hb" x="541.5" y="387.4"/><rect class="ht" x="546.6" y="389.4"/><rect class="hb" x="550.1" y="389.9"/><rect class="ht" x="542.4" y="390.9"/><rect class="ht" x="542.0" y="396.4"/><rect class="hb" x="541.5" y="401.0"/><rect class="ht" x="540.0" y="413.1"/><rect class="hr" x="561.2" y="405.7"/><rect class="ht" x="566.2" y="406.3"/><rect class="hb" x="569.2" y="406.5"/><rect class="ht" x="566.7" y="412.6"/><rect class="ht" x="559.5" y="417.6"/><rect class="ht" x="567.2" y="418.8"/><rect class="ht" x="344.2" y="423.5"/><rect class="hb" x="343.0" y="436.4"/><rect class="hr" x="351.5" y="437.1"/><rect class="ht" x="358.5" y="437.7"/><rect class="hb" x="365.5" y="437.7"/><rect class="hb" x="374.4" y="439.0"/><rect class="ht" x="375.4" y="426.4"/><rect class="ht" x="350.7" y="442.7"/><rect class="hb" x="350.7" y="445.7"/><rect class="ht" x="358.1" y="444.7"/><rect class="ht" x="365.3" y="442.2"/><rect class="hb" x="365.1" y="446.7"/><rect class="ht" x="373.6" y="444.7"/><rect class="hb" x="373.4" y="449.4"/><rect class="ht" x="383.8" y="449.4"/><rect class="hb" x="394.0" y="451.8"/><rect class="ht" x="397.0" y="430.6"/><rect class="hb" x="407.3" y="428.1"/><rect class="hb" x="401.1" y="439.2"/><rect class="ht" x="405.1" y="444.0"/><rect class="ht" x="408.4" y="418.5"/><rect class="hb" x="408.4" y="421.5"/><rect class="hb" x="355.7" y="458.8"/><rect class="hb" x="454.3" y="452.5"/><rect class="hb" x="403.1" y="459.3"/><rect class="ht" x="410.6" y="459.3"/><rect class="ht" x="418.2" y="461.3"/><rect class="ht" x="428.6" y="463.8"/><rect class="hb" x="438.9" y="464.3"/><rect class="ht" x="461.0" y="465.7"/><rect class="ht" x="392.5" y="469.6"/><rect class="ht" x="401.9" y="474.4"/><rect class="ht" x="438.3" y="477.2"/><rect class="hr" x="329.9" y="485.5"/><rect class="ht" x="334.9" y="485.3"/><rect class="hb" x="337.1" y="485.3"/><rect class="ht" x="356.8" y="489.5"/><rect class="ht" x="359.8" y="489.3"/><rect class="hb" x="390.8" y="486.3"/><rect class="hb" x="382.4" y="493.4"/><rect class="ht" x="388.0" y="491.7"/><rect class="ht" x="394.3" y="494.6"/><rect class="hr" x="401.6" y="487.0"/><rect class="hb" x="401.1" y="491.0"/><rect class="ht" x="403.4" y="493.4"/><rect class="hb" x="405.6" y="495.6"/><rect class="ht" x="411.5" y="495.6"/><rect class="hb" x="417.2" y="495.6"/><rect class="ht" x="420.2" y="489.0"/><rect class="ht" x="426.8" y="495.4"/><rect class="hb" x="437.3" y="490.0"/><rect class="hb" x="436.3" y="495.6"/><rect class="ht" x="449.4" y="490.8"/><rect class="hb" x="462.3" y="486.5"/><rect class="ht" x="472.0" y="484.0"/><rect class="hb" x="329.9" y="496.1"/><rect class="ht" x="335.6" y="498.1"/><rect class="hb" x="341.1" y="499.1"/><rect class="ht" x="361.3" y="501.1"/><rect class="ht" x="366.8" y="501.6"/><rect class="ht" x="386.5" y="501.6"/><rect class="hr" x="422.2" y="501.1"/><rect class="ht" x="431.3" y="500.1"/><rect class="ht" x="439.4" y="500.6"/><rect class="ht" x="427.8" y="417.0"/><rect class="ht" x="435.6" y="417.5"/><rect class="ht" x="443.4" y="423.0"/><rect class="hb" x="443.4" y="425.1"/><rect class="ht" x="455.5" y="424.6"/><rect class="ht" x="467.6" y="422.5"/><rect class="hb" x="467.1" y="427.1"/><rect class="ht" x="468.5" y="421.5"/><rect class="hb" x="473.5" y="427.6"/><rect class="hb" x="468.0" y="427.1"/><rect class="hb" x="487.7" y="421.5"/><rect class="ht" x="492.7" y="422.0"/><rect class="ht" x="497.7" y="418.0"/><rect class="hb" x="497.7" y="422.5"/><rect class="ht" x="505.3" y="424.6"/><rect class="hr" x="513.3" y="425.6"/><rect class="ht" x="519.4" y="425.1"/><rect class="ht" x="528.4" y="425.3"/><rect class="hb" x="537.5" y="425.6"/><rect class="ht" x="513.1" y="430.1"/><rect class="hb" x="512.8" y="432.9"/><rect class="ht" x="524.7" y="432.6"/><rect class="ht" x="537.0" y="430.6"/><rect class="hb" x="536.8" y="435.3"/><rect class="ht" x="559.7" y="418.5"/><rect class="ht" x="567.2" y="419.0"/><rect class="ht" x="567.2" y="424.6"/><rect class="hb" x="557.2" y="429.6"/><rect class="ht" x="562.2" y="430.1"/><rect class="hb" x="567.7" y="430.6"/><rect class="hr" x="583.1" y="433.6"/><rect class="ht" x="589.2" y="433.1"/><rect class="ht" x="598.3" y="433.6"/><rect class="hb" x="606.8" y="433.6"/><rect class="ht" x="582.6" y="438.2"/><rect class="hb" x="582.3" y="441.0"/><rect class="ht" x="594.2" y="441.0"/><rect class="ht" x="606.5" y="438.7"/><rect class="hb" x="606.3" y="443.4"/><rect class="hb" x="483.3" y="466.9"/><rect class="ht" x="484.3" y="474.2"/><rect class="hb" x="485.4" y="481.5"/><rect class="ht" x="473.9" y="484.0"/><rect class="ht" x="574.7" y="465.8" rx="1.3" style="width:7.2px;height:7.2px;stroke:#8aa0c0;stroke-width:1px"/><rect class="ht" x="581.1" y="479.3"/><rect class="ht" x="588.2" y="477.9"/><rect class="hb" x="580.3" y="486.5"/><rect class="ht" x="606.8" y="473.4"/><rect class="ht" x="606.8" y="480.5"/><rect class="hr" x="540.3" y="489.0"/><rect class="ht" x="550.9" y="486.5"/><rect class="hb" x="561.5" y="484.0"/><rect class="ht" x="571.1" y="485.3"/><rect class="ht" x="517.4" y="494.4"/><rect class="ht" x="543.1" y="497.1"/><rect class="hr" x="521.4" y="501.1"/><rect class="hr" x="549.6" y="500.1"/><rect class="ht" x="554.6" y="500.1"/><rect class="hb" x="558.7" y="500.1"/><rect class="ht" x="563.7" y="501.1"/><rect class="hb" x="569.2" y="501.1"/><rect class="ht" x="533.0" y="501.6"/><rect class="ht" x="473.5" y="501.6"/><rect class="hb" x="329.9" y="497.5"/><rect class="ht" x="335.6" y="498.5"/><rect class="hb" x="341.1" y="499.2"/><rect class="ht" x="361.1" y="502.2"/><rect class="ht" x="366.8" y="503.3"/><rect class="hb" x="382.4" y="507.1"/><rect class="ht" x="386.4" y="502.9" rx="1.3" style="width:7.2px;height:7.2px;stroke:#8aa0c0;stroke-width:1px"/><rect class="ht" x="388.0" y="506.6"/><rect class="hb" x="391.5" y="508.1"/><rect class="ht" x="394.7" y="508.9"/><rect class="hb" x="398.6" y="509.6"/><rect class="ht" x="406.1" y="514.1"/><rect class="ht" x="411.7" y="514.9"/><rect class="hb" x="415.2" y="519.7"/><rect class="hb" x="424.5" y="522.5"/><rect class="ht" x="425.8" y="528.2"/><rect class="ht" x="431.6" y="529.4"/><rect class="hb" x="435.8" y="538.3"/><rect class="ht" x="443.4" y="547.9"/><rect class="ht" x="444.4" y="549.9"/><rect class="hb" x="451.4" y="558.7"/><rect class="hb" x="453.0" y="561.0"/><rect class="ht" x="447.4" y="562.0"/><rect class="hb" x="444.4" y="565.8"/><rect class="ht" x="459.7" y="570.3"/><rect class="ht" x="456.0" y="578.6"/><rect class="ht" x="462.0" y="578.6"/><rect class="hb" x="467.1" y="579.1"/><rect class="hr" x="422.0" y="502.0"/><rect class="ht" x="431.3" y="500.8"/><rect class="ht" x="439.4" y="502.5"/><rect class="ht" x="429.8" y="507.6"/><rect class="ht" x="434.8" y="507.1"/><rect class="ht" x="439.4" y="506.1"/><rect class="hb" x="424.8" y="507.1"/><rect class="ht" x="435.3" y="514.9"/><rect class="hr" x="457.0" y="513.6"/><rect class="ht" x="464.5" y="507.9"/><rect class="hb" x="472.0" y="504.6"/><rect class="ht" x="452.5" y="523.4"/><rect class="hb" x="453.3" y="533.5"/><rect class="ht" x="455.8" y="538.8"/><rect class="hb" x="458.5" y="543.8"/><rect class="ht" x="465.5" y="554.2"/><rect class="hb" x="472.0" y="565.0"/><rect class="ht" x="398.4" y="562.5"/><rect class="hb" x="408.4" y="568.3"/><rect class="ht" x="426.6" y="566.8"/><rect class="ht" x="406.9" y="578.4"/><rect class="ht" x="392.5" y="581.6"/><rect class="hb" x="473.3" y="504.0" rx="1.3" style="width:7.2px;height:7.2px;stroke:#8aa0c0;stroke-width:1px"/><rect class="hr" x="521.4" y="502.2"/><rect class="ht" x="533.5" y="503.5"/><rect class="hb" x="544.6" y="505.1"/><rect class="ht" x="543.1" y="498.0"/><rect class="hr" x="549.8" y="500.5"/><rect class="ht" x="555.1" y="500.0"/><rect class="hb" x="558.5" y="499.5"/><rect class="ht" x="563.5" y="502.0"/><rect class="hb" x="569.0" y="502.8"/><rect class="ht" x="555.6" y="506.1"/><rect class="hb" x="548.6" y="507.1"/><rect class="hb" x="558.2" y="508.1"/><rect class="ht" x="578.6" y="506.6"/><rect class="ht" x="567.7" y="512.1"/><rect class="ht" x="519.9" y="515.1"/><rect class="hb" x="518.4" y="527.7"/><rect class="hr" x="517.7" y="532.8"/><rect class="ht" x="525.2" y="532.5"/><rect class="hb" x="532.0" y="532.8"/><rect class="ht" x="536.5" y="530.0"/><rect class="ht" x="517.2" y="537.3"/><rect class="hb" x="516.7" y="542.0"/><rect class="ht" x="523.9" y="542.5"/><rect class="ht" x="531.5" y="537.8"/><rect class="hb" x="531.5" y="544.0"/><rect class="hb" x="555.6" y="518.7"/><rect class="ht" x="561.5" y="521.0"/><rect class="hb" x="567.0" y="521.4"/><rect class="ht" x="555.4" y="522.7"/><rect class="ht" x="555.1" y="528.2"/><rect class="hb" x="554.6" y="533.3"/><rect class="ht" x="566.0" y="526.7"/><rect class="hb" x="576.6" y="525.7"/><rect class="ht" x="576.6" y="528.4"/><rect class="hb" x="494.4" y="538.3"/><rect class="ht" x="467.0" y="554.4"/><rect class="hb" x="472.6" y="564.4" rx="1.3" style="width:7.2px;height:7.2px;stroke:#8aa0c0;stroke-width:1px"/><rect class="ht" x="522.7" y="568.3"/><rect class="hb" x="571.5" y="570.6" rx="1.3" style="width:7.2px;height:7.2px;stroke:#8aa0c0;stroke-width:1px"/><rect class="ht" x="481.4" y="576.6"/><rect class="hb" x="467.0" y="578.6"/><rect class="ht" x="406.9" y="578.5"/><rect class="ht" x="393.2" y="584.2"/><rect class="hr" x="408.6" y="586.5"/><rect class="hb" x="404.6" y="589.2"/><rect class="ht" x="407.6" y="589.7"/><rect class="ht" x="424.8" y="589.2"/><rect class="ht" x="422.2" y="592.1"/><rect class="hb" x="436.3" y="594.5"/><rect class="hb" x="441.9" y="592.5"/><rect class="hb" x="447.4" y="590.7"/><rect class="ht" x="449.4" y="587.0"/><rect class="ht" x="453.0" y="581.7"/><rect class="ht" x="456.0" y="578.7"/><rect class="ht" x="462.0" y="579.0"/><rect class="hb" x="467.1" y="579.4"/><rect class="ht" x="472.0" y="588.2"/><rect class="ht" x="377.6" y="599.8"/><rect class="ht" x="376.4" y="607.7"/><rect class="hr" x="374.9" y="615.6"/><rect class="hr" x="399.1" y="615.6"/><rect class="hr" x="404.1" y="615.6"/><rect class="ht" x="406.4" y="599.3"/><rect class="ht" x="404.4" y="609.1"/><rect class="ht" x="413.5" y="610.7"/><rect class="hb" x="422.2" y="611.4"/><rect class="hb" x="422.2" y="616.4"/><rect class="ht" x="422.2" y="613.9"/><rect class="ht" x="434.3" y="604.1"/><rect class="ht" x="439.9" y="603.5"/><rect class="ht" x="445.4" y="603.1"/><rect class="hb" x="431.3" y="613.9"/><rect class="hb" x="438.3" y="613.9"/><rect class="ht" x="434.8" y="613.9"/><rect class="ht" x="443.4" y="615.4"/><rect class="hb" x="470.1" y="611.4"/><rect class="ht" x="481.4" y="576.6"/><rect class="hb" x="489.7" y="588.2"/><rect class="ht" x="472.0" y="588.2"/><rect class="ht" x="478.9" y="597.6"/><rect class="hb" x="489.7" y="600.5"/><rect class="ht" x="499.4" y="601.8"/><rect class="hr" x="491.5" y="615.7"/><rect class="hb" x="508.8" y="615.4"/><rect class="hb" x="470.5" y="611.4"/><rect class="hb" x="467.0" y="579.2"/><rect class="hb" x="553.8" y="602.5"/><rect class="hr" x="570.3" y="591.6"/><rect class="ht" x="576.3" y="588.7"/><rect class="ht" x="582.3" y="590.7"/><rect class="ht" x="592.2" y="587.0"/><rect class="ht" x="591.9" y="594.8"/><rect class="ht" x="585.4" y="596.1"/><rect class="hb" x="580.8" y="599.3"/><rect class="hb" x="583.9" y="601.8"/><rect class="ht" x="588.4" y="601.8"/><rect class="hb" x="592.9" y="601.8"/><rect class="ht" x="569.5" y="601.6"/><rect class="ht" x="580.8" y="605.9"/><rect class="ht" x="585.4" y="608.4"/><rect class="hb" x="568.7" y="610.4"/><rect class="ht" x="569.5" y="613.6"/><rect class="ht" x="575.3" y="614.6"/><rect class="ht" x="579.8" y="613.9"/><rect class="hb" x="584.9" y="614.4"/><rect class="ht" x="595.1" y="615.1"/><rect class="hr" x="605.8" y="615.6"/><rect class="ht" x="574.8" y="465.6" rx="1.3" style="width:7.2px;height:7.2px;stroke:#8aa0c0;stroke-width:1px"/><rect class="ht" x="606.5" y="473.3"/><rect class="ht" x="607.0" y="480.0"/><rect class="ht" x="588.0" y="478.0"/><rect class="ht" x="581.3" y="479.2"/><rect class="hb" x="580.7" y="486.3"/><rect class="hb" x="561.5" y="483.9"/><rect class="ht" x="571.2" y="485.1"/><rect class="hb" x="557.6" y="502.3"/><rect class="ht" x="562.9" y="502.3"/><rect class="hb" x="569.2" y="503.1"/><rect class="ht" x="578.7" y="506.7"/><rect class="ht" x="567.7" y="512.4"/><rect class="ht" x="567.9" y="513.4"/><rect class="ht" x="561.1" y="520.9"/><rect class="hb" x="567.2" y="521.3"/><rect class="ht" x="566.3" y="526.7"/><rect class="hb" x="576.5" y="525.6"/><rect class="ht" x="576.5" y="528.4"/><rect class="ht" x="577.4" y="589.0"/><rect class="ht" x="582.2" y="590.8"/><rect class="ht" x="592.7" y="587.2"/><rect class="ht" x="591.8" y="594.7"/><rect class="ht" x="584.9" y="596.2"/></g><circle cx="613.1" cy="641" r="40" fill="url(#halo)"/><path d="M612.8,640.6 L612.8,663.2 L618.3,658.2 L622.6,668.2 L626.4,666.6 L622.2,656.8 L629,656.6 Z" fill="#fff" stroke="#fff" stroke-width="2.6" stroke-linejoin="round"/><path d="M612.8,640.6 L612.8,663.2 L618.3,658.2 L622.6,668.2 L626.4,666.6 L622.2,656.8 L629,656.6 Z" fill="#fff" stroke="#111" stroke-width=".9" stroke-linejoin="miter"/></g></svg>
<div class="a" style="left:1154px;top:124px;width:301px;height:674px;background:#ececec"></div><div class="t" style="left:1222px;width:200px;text-align:center;top:127.9px;font-size:11.6px;color:#222;letter-spacing:.05px">Layer List</div><svg style="left:0px;top:0px" width="1500" height="844" viewBox="0 0 1500 844"><circle cx="1164" cy="133.5" r="6.8" fill="#5c5c5c"/><path d="M1161.2,130.7 l5.6,5.6 M1166.8,130.7 l-5.6,5.6" stroke="#ececec" stroke-width="1.7" stroke-linecap="round"/><circle cx="1182" cy="133.5" r="6.8" fill="#5c5c5c"/><rect x="1180.4" y="130.3" width="5" height="4" rx=".6" fill="none" stroke="#ececec" stroke-width="1.1"/><rect x="1178.4" y="132.5" width="5" height="4" rx=".6" fill="#5c5c5c" stroke="#ececec" stroke-width="1.1"/></svg><div class="t" style="left:1222px;width:200px;text-align:center;top:563.9px;font-size:11.6px;color:#222;letter-spacing:.05px">Selection Filter</div><svg style="left:0px;top:0px" width="1500" height="844" viewBox="0 0 1500 844"><circle cx="1164" cy="569.5" r="6.8" fill="#5c5c5c"/><path d="M1161.2,566.7 l5.6,5.6 M1166.8,566.7 l-5.6,5.6" stroke="#ececec" stroke-width="1.7" stroke-linecap="round"/><circle cx="1182" cy="569.5" r="6.8" fill="#5c5c5c"/><rect x="1180.4" y="566.3" width="5" height="4" rx=".6" fill="none" stroke="#ececec" stroke-width="1.1"/><rect x="1178.4" y="568.5" width="5" height="4" rx=".6" fill="#5c5c5c" stroke="#ececec" stroke-width="1.1"/></svg><div class="a" style="left:1155px;top:579px;width:300px;height:2px;background:#d4d4d4"></div><div class="btn" style="left:1155.5px;top:145px;width:59.8px;height:26px;border-color:#b4b4b4"></div><div class="btn" style="left:1215.3px;top:145px;width:59.8px;height:26px;border-color:#b4b4b4"></div><div class="btn" style="left:1275.1px;top:145px;width:59.8px;height:26px;border-color:#b4b4b4"></div><div class="btn" style="left:1334.9px;top:145px;width:59.8px;height:26px;border-color:#b4b4b4"></div><div class="btn" style="left:1394.7px;top:145px;width:59.8px;height:26px;border-color:#b4b4b4"></div><div class="a" style="left:1155.5px;top:170.5px;width:299px;height:388px;background:#fff;box-sizing:border-box;border:1px solid #cfcfcf;border-top-color:#b8b8b8"></div><div class="a" style="left:1156px;top:192px;width:298px;height:20px;background:#0745d7"></div><div class="a" style="left:1180.5px;top:177.5px;width:17px;height:9.5px;box-sizing:border-box;border:1px solid #000;background:#fff"></div><div class="t" style="left:1203px;top:175px;font-size:13.3px;color:#111">0</div><div class="a" style="left:1180.5px;top:197.5px;width:17px;height:9.5px;box-sizing:border-box;background:#3a4352"></div><div class="t" style="left:1203px;top:195px;font-size:13.3px;color:#fff">Cadastral Numbers</div><div class="a" style="left:1180.5px;top:217.5px;width:17px;height:9.5px;box-sizing:border-box;background:#000"></div><div class="t" style="left:1203px;top:215px;font-size:13.3px;color:#111">Text</div><svg style="left:0px;top:0px" width="1500" height="844" viewBox="0 0 1500 844"><g transform="translate(1185.5,158) scale(1.0)"><path d="M-7.6,0.4 Q-4,-5.2 0,-5.2 Q4,-5.2 7.6,0.4 Q4,5 0,5 Q-4,5 -7.6,0.4 Z" fill="#000"/><path d="M-5.6,1.6 Q-3.6,-1.4 -1,-2.2 A3.6,3.6 0 0 0 -2.6,3.8 Q-4.4,3.2 -5.6,1.6 Z" fill="#fff"/><path d="M5.6,1.6 Q3.6,-1.4 1.6,-2.2 A3.6,3.6 0 0 1 2.6,3.8 Q4.4,3.2 5.6,1.6 Z" fill="#fff"/><circle cx="-.8" cy="-.8" r="1" fill="#fff" opacity=".55"/></g><g transform="translate(1245,158) scale(1.0)"><path d="M-7.6,0.4 Q-4,-5.2 0,-5.2 Q4,-5.2 7.6,0.4 Q4,5 0,5 Q-4,5 -7.6,0.4 Z" fill="#a8a8a8"/><path d="M-5.6,1.6 Q-3.6,-1.4 -1,-2.2 A3.6,3.6 0 0 0 -2.6,3.8 Q-4.4,3.2 -5.6,1.6 Z" fill="#fff"/><path d="M5.6,1.6 Q3.6,-1.4 1.6,-2.2 A3.6,3.6 0 0 1 2.6,3.8 Q4.4,3.2 5.6,1.6 Z" fill="#fff"/><circle cx="-.8" cy="-.8" r="1" fill="#fff" opacity=".55"/></g><path d="M1298.8,158 h11 M1304.3,152.5 v11" stroke="#e00000" stroke-width="2.6"/><path d="M1359,158 h11" stroke="#e00000" stroke-width="2.6"/><g transform="translate(1425,158) scale(1.15) rotate(-45)"><path d="M-7,-1.7 L-10.6,0 L-7,1.7 Z" fill="#e8d0a8" stroke="#806040" stroke-width=".4"/><path d="M-10.6,0 l1.6,-.8 v1.6z" fill="#222"/><rect x="-7" y="-1.7" width="13.5" height="3.4" fill="#e8a030" stroke="#a86810" stroke-width=".5"/><rect x="-7" y="-.6" width="13.5" height="1.1" fill="#f8cc70"/><rect x="6.5" y="-1.7" width="2.8" height="3.4" fill="#e03020" stroke="#901808" stroke-width=".4"/></g><g transform="translate(1423,182) scale(0.98)"><path d="M-7.6,0.4 Q-4,-5.2 0,-5.2 Q4,-5.2 7.6,0.4 Q4,5 0,5 Q-4,5 -7.6,0.4 Z" fill="#000"/><path d="M-5.6,1.6 Q-3.6,-1.4 -1,-2.2 A3.6,3.6 0 0 0 -2.6,3.8 Q-4.4,3.2 -5.6,1.6 Z" fill="#fff"/><path d="M5.6,1.6 Q3.6,-1.4 1.6,-2.2 A3.6,3.6 0 0 1 2.6,3.8 Q4.4,3.2 5.6,1.6 Z" fill="#fff"/><circle cx="-.8" cy="-.8" r="1" fill="#fff" opacity=".55"/></g><path d="M1441.7,181.2 v-3 a3.3,3.6 0 0 1 6.6,0 v3" fill="none" stroke="#b4b4b4" stroke-width="1.4"/><rect x="1439.8" y="180.89999999999998" width="10.4" height="7.6" fill="#b4b4b4"/><g transform="translate(1423,202) scale(0.98)"><path d="M-7.6,0.4 Q-4,-5.2 0,-5.2 Q4,-5.2 7.6,0.4 Q4,5 0,5 Q-4,5 -7.6,0.4 Z" fill="#000"/><path d="M-5.6,1.6 Q-3.6,-1.4 -1,-2.2 A3.6,3.6 0 0 0 -2.6,3.8 Q-4.4,3.2 -5.6,1.6 Z" fill="#fff"/><path d="M5.6,1.6 Q3.6,-1.4 1.6,-2.2 A3.6,3.6 0 0 1 2.6,3.8 Q4.4,3.2 5.6,1.6 Z" fill="#fff"/><circle cx="-.8" cy="-.8" r="1" fill="#fff" opacity=".55"/></g><path d="M1441.7,201.2 v-3 a3.3,3.6 0 0 1 6.6,0 v3" fill="none" stroke="#b4b4b4" stroke-width="1.4"/><rect x="1439.8" y="200.89999999999998" width="10.4" height="7.6" fill="#b4b4b4"/><g transform="translate(1423,222) scale(0.98)"><path d="M-7.6,0.4 Q-4,-5.2 0,-5.2 Q4,-5.2 7.6,0.4 Q4,5 0,5 Q-4,5 -7.6,0.4 Z" fill="#000"/><path d="M-5.6,1.6 Q-3.6,-1.4 -1,-2.2 A3.6,3.6 0 0 0 -2.6,3.8 Q-4.4,3.2 -5.6,1.6 Z" fill="#fff"/><path d="M5.6,1.6 Q3.6,-1.4 1.6,-2.2 A3.6,3.6 0 0 1 2.6,3.8 Q4.4,3.2 5.6,1.6 Z" fill="#fff"/><circle cx="-.8" cy="-.8" r="1" fill="#fff" opacity=".55"/></g><path d="M1441.7,221.2 v-3 a3.3,3.6 0 0 1 6.6,0 v3" fill="none" stroke="#b4b4b4" stroke-width="1.4"/><rect x="1439.8" y="220.89999999999998" width="10.4" height="7.6" fill="#b4b4b4"/><g transform="translate(1401,202) scale(1.0) rotate(-45)"><path d="M-7,-1.7 L-10.6,0 L-7,1.7 Z" fill="#e8d0a8" stroke="#806040" stroke-width=".4"/><path d="M-10.6,0 l1.6,-.8 v1.6z" fill="#222"/><rect x="-7" y="-1.7" width="13.5" height="3.4" fill="#e8a030" stroke="#a86810" stroke-width=".5"/><rect x="-7" y="-.6" width="13.5" height="1.1" fill="#f8cc70"/><rect x="6.5" y="-1.7" width="2.8" height="3.4" fill="#e03020" stroke="#901808" stroke-width=".4"/></g></svg><div class="a" style="left:1167px;top:594.5px;width:276px;height:135px;background:#e5e5e5;border-radius:3px"></div><div class="t" style="left:1174px;top:585.5px;font-size:12px;color:#222">Filter</div><div class="t" style="left:1182px;top:618.5px;font-size:13.4px;color:#111">Entity type:</div><div class="combo" style="left:1265.5px;top:614px"><span>Text [26]</span><b></b><svg style="right:2px;top:2px;left:auto" width="16" height="16" viewBox="0 0 16 16"><path d="M5,6.4 L8,3.4 L11,6.4 M5,9.6 L8,12.6 L11,9.6" fill="none" stroke="#fff" stroke-width="1.5" stroke-linecap="round" stroke-linejoin="round"/></svg></div><div class="t" style="left:1182px;top:644.5px;font-size:13.4px;color:#111">Property:</div><div class="combo" style="left:1265.5px;top:640px"><span>Color</span><b></b><svg style="right:2px;top:2px;left:auto" width="16" height="16" viewBox="0 0 16 16"><path d="M5,6.4 L8,3.4 L11,6.4 M5,9.6 L8,12.6 L11,9.6" fill="none" stroke="#fff" stroke-width="1.5" stroke-linecap="round" stroke-linejoin="round"/></svg></div><div class="t" style="left:1182px;top:670.5px;font-size:13.4px;color:#111">Comparison:</div><div class="combo" style="left:1265.5px;top:666px"><span>= (is)</span><b></b><svg style="right:2px;top:2px;left:auto" width="16" height="16" viewBox="0 0 16 16"><path d="M5,6.4 L8,3.4 L11,6.4 M5,9.6 L8,12.6 L11,9.6" fill="none" stroke="#fff" stroke-width="1.5" stroke-linecap="round" stroke-linejoin="round"/></svg></div><div class="t" style="left:1182px;top:696.5px;font-size:13.4px;color:#111">Value:</div><div class="combo" style="left:1265.5px;top:692px"><i style="position:absolute;left:4px;top:5.5px;width:16px;height:9px;box-sizing:border-box;border:1px solid #000;background:#ffff00"></i><span style="left:26px">Yellow</span><b></b><svg style="right:2px;top:2px;left:auto" width="16" height="16" viewBox="0 0 16 16"><path d="M5,6.4 L8,3.4 L11,6.4 M5,9.6 L8,12.6 L11,9.6" fill="none" stroke="#fff" stroke-width="1.5" stroke-linecap="round" stroke-linejoin="round"/></svg></div><div class="btn" style="left:1167px;top:745px;width:70px;height:26px;border-color:#b0b0b0"></div><div class="btn" style="left:1236px;top:745px;width:70px;height:26px;border-color:#b0b0b0"></div><div class="btn" style="left:1305px;top:745px;width:70px;height:26px;border-color:#b0b0b0"></div><div class="btn" style="left:1374px;top:745px;width:70px;height:26px;border-color:#b0b0b0"></div><svg style="left:0px;top:0px" width="1500" height="844" viewBox="0 0 1500 844"><rect x="1194.5" y="751.5" width="12.5" height="12.5" fill="#fb9a99" stroke="#000" stroke-width=".8" stroke-dasharray="1.4 1.2"/><rect x="1264" y="751.5" width="9.5" height="9.5" fill="#fb9a99" stroke="#c04040" stroke-width=".7"/><rect x="1267.5" y="755.5" width="9.5" height="9" fill="#fb9a99" stroke="#000" stroke-width=".8" stroke-dasharray="1.4 1.2"/><rect x="1333" y="751.5" width="9.5" height="9.5" fill="#fb9a99" stroke="#c04040" stroke-width=".7"/><rect x="1336.5" y="755.5" width="9.5" height="9" fill="#fff" stroke="#000" stroke-width=".8" stroke-dasharray="1.4 1.2"/><rect x="1402" y="751.5" width="9.5" height="9.5" fill="#fff" stroke="#808080" stroke-width=".7"/><rect x="1405.5" y="755.5" width="9.5" height="9" fill="#fff" stroke="#000" stroke-width=".8" stroke-dasharray="1.4 1.2"/><rect x="1405.5" y="755.5" width="6" height="5.5" fill="#fb9a99"/></svg>
<div class="a" style="left:1455px;top:124px;width:45px;height:674px;background:linear-gradient(90deg,#dcdcdc 0,#ececec 8%,#e2e2e2 40%,#c6c6c6 100%)"></div><div class="hgrip" style="left:1462px;top:131px;width:27px;background:repeating-linear-gradient(90deg,#a6a6a6 0,#a6a6a6 2px,transparent 2px,transparent 6px)"></div><div class="a" style="left:1456px;top:135px;width:44px;height:42.5px;border-radius:6px;background:#b4b4b4"></div><div class="a" style="left:1456px;top:330px;width:44px;height:42.5px;border-radius:6px;background:#b4b4b4"></div><div class="a" style="left:1456px;top:433px;width:44px;height:42.5px;border-radius:6px;background:#b4b4b4"></div><div class="hsep" style="left:1458px;top:276px;width:42px"></div><div class="hsep" style="left:1458px;top:425px;width:42px"></div><div class="hsep" style="left:1458px;top:528px;width:42px"></div><svg style="left:0px;top:0px" width="1500" height="844" viewBox="0 0 1500 844"><rect x="1463.5" y="142.5" width="27" height="27" fill="#fff" stroke="#3c3c3c" stroke-width=".9"/><rect x="1463" y="142" width="28" height="4.6" fill="#000"/><rect x="1464" y="143" width="2.8" height="2.8" fill="#fff"/><g stroke-width=".7"><path d="M1470,156 l6,-3 v10 l-6,3z" fill="#909090" stroke="#444"/><path d="M1472.5,155 l6,-3 v10 l-6,3z" fill="#b0b0b0" stroke="#444"/><path d="M1475,154 l9.5,-4.4 v10.4 l-9.5,4.4z" fill="#fff" stroke="#444"/><path d="M1477,161 l5,-7 v5z M1480,160.5 a2,2 0 1 0 .1,0" fill="none" stroke="#e02020"/></g><rect x="1463.5" y="189.5" width="27" height="27" fill="#fff" stroke="#3c3c3c" stroke-width=".9"/><rect x="1463" y="189" width="28" height="4.6" fill="#000"/><rect x="1464" y="190" width="2.8" height="2.8" fill="#fff"/><rect x="1470.5" y="199.5" width="10" height="8" fill="#f8eeb8" stroke="#555" stroke-width=".7"/><circle cx="1480.5" cy="208.5" r="4.4" fill="#f8eeb8" fill-opacity=".8" stroke="#555" stroke-width=".7"/><rect x="1463.5" y="235.5" width="27" height="27" fill="#fff" stroke="#3c3c3c" stroke-width=".9"/><rect x="1463" y="235" width="28" height="4.6" fill="#000"/><rect x="1464" y="236" width="2.8" height="2.8" fill="#fff"/><rect x="1469" y="246.5" width="16.5" height="10.5" rx="2" fill="#f4f6fa" stroke="#c0cce4" stroke-width="1"/><rect x="1463.5" y="291.5" width="27" height="27" fill="#fff" stroke="#3c3c3c" stroke-width=".9"/><rect x="1463" y="291" width="28" height="4.6" fill="#000"/><rect x="1464" y="292" width="2.8" height="2.8" fill="#fff"/><rect x="1466.5" y="299.6" width="3.6" height="3.2" fill="#000"/><rect x="1473.5" y="299.6" width="13.5" height="3" fill="#fff" stroke="#444" stroke-width=".6"/><rect x="1466.5" y="305.6" width="3.6" height="3.2" fill="#000"/><rect x="1473.5" y="305.6" width="13.5" height="3" fill="#fff" stroke="#444" stroke-width=".6"/><rect x="1466.5" y="311.6" width="3.6" height="3.2" fill="#000"/><rect x="1473.5" y="311.6" width="13.5" height="3" fill="#fff" stroke="#444" stroke-width=".6"/><rect x="1463.5" y="337.5" width="27" height="27" fill="#fff" stroke="#3c3c3c" stroke-width=".9"/><rect x="1463" y="337" width="28" height="4.6" fill="#000"/><rect x="1464" y="338" width="2.8" height="2.8" fill="#fff"/><path d="M1469.5,347 h15 l-5.6,6.4 v9 l-3.2,-1.4 v-7.6 z" fill="#c8c8c8" stroke="#555" stroke-width=".7"/><ellipse cx="1477" cy="347" rx="7.5" ry="1.6" fill="#8c8c8c" stroke="#444" stroke-width=".6"/><rect x="1463.5" y="384.5" width="27" height="27" fill="#fff" stroke="#3c3c3c" stroke-width=".9"/><rect x="1463" y="384" width="28" height="4.6" fill="#000"/><rect x="1464" y="385" width="2.8" height="2.8" fill="#fff"/><path d="M1469.5,393 l4.5,2.6 v8.6 l-4.5,2.6 z" fill="#fff" stroke="#333" stroke-width=".8"/><rect x="1474" y="396" width="11" height="7.8" rx="1.6" fill="#9a9a9a" stroke="#555" stroke-width=".6"/><rect x="1480" y="396.5" width="4.4" height="6.8" fill="#777"/><path d="M1467,399.9 h20" stroke="#f08080" stroke-width=".7" stroke-dasharray="2.4 1"/><rect x="1463.5" y="441.0" width="27" height="27" fill="#fff" stroke="#3c3c3c" stroke-width=".9"/><rect x="1463" y="440.5" width="28" height="4.6" fill="#000"/><rect x="1464" y="441.5" width="2.8" height="2.8" fill="#fff"/><rect x="1465.5" y="448.1" width="13" height="1.1" fill="#9a9a9a"/><rect x="1465.5" y="451.5" width="12" height="1.1" fill="#9a9a9a"/><rect x="1465.5" y="454.90000000000003" width="14" height="1.1" fill="#9a9a9a"/><rect x="1465.5" y="458.3" width="16" height="1.1" fill="#9a9a9a"/><path d="M1463.5,463 h27" stroke="#333" stroke-width=".7"/><rect x="1472" y="464.4" width="16" height="1.6" fill="#666"/><rect x="1465.5" y="464.4" width="2.4" height="1.6" fill="#666"/><rect x="1463.5" y="487.5" width="27" height="27" fill="#fff" stroke="#3c3c3c" stroke-width=".9"/><rect x="1463" y="487" width="28" height="4.6" fill="#000"/><rect x="1464" y="488" width="2.8" height="2.8" fill="#fff"/><rect x="1470.6" y="495.2" width="13" height="14.4" rx="1" fill="#c89038" stroke="#8a5a10" stroke-width=".6"/><path d="M1472.4,497 h9.4 v8.6 l-2.4,2.6 h-7z" fill="#f4f4f4" stroke="#a0a0a0" stroke-width=".4"/><rect x="1474" y="494" width="6.2" height="2.8" rx=".8" fill="#8a8a7c" stroke="#5c5c50" stroke-width=".4"/><path d="M1473.6,500 h7 M1473.6,502 h7 M1473.6,504 h5" stroke="#c0c0c0" stroke-width=".6"/></svg><div class="t" style="left:1464.4px;top:546.6px;font-family:'DejaVu Sans Light','DejaVu Sans',sans-serif;font-weight:200;font-size:24.2px;color:#000;-webkit-text-stroke:.35px #000;transform:scaleX(.8);transform-origin:0 0;letter-spacing:-.3px">3D</div>
<div class="a" style="left:72px;top:747px;width:1082px;height:51px;background:#ececec"></div><div class="a" style="left:72px;top:747.5px;width:1082px;height:23px;background:#fff;box-sizing:border-box;border-top:1px solid #c4c4c4;border-bottom:1px solid #c4c4c4"></div><div class="t" style="left:77px;top:751px;font-size:13px;color:#0000cc"><i>Command:</i> layeradd</div><div class="a" style="left:1142.5px;top:750px;width:7.5px;height:17px;border-radius:4px;background:#7f7f7f"></div><div class="t" style="left:73px;top:778.5px;font-size:13.2px;color:#111">Command:</div><div class="a" style="left:142px;top:776px;width:986px;height:18.5px;background:#fff"></div><div class="btn" style="left:1127.5px;top:773px;width:26px;height:25px;border-color:#b0b0b0"></div><svg style="left:1133px;top:779.5px" width="14" height="11" viewBox="0 0 14 11"><rect x="0.5" y="0.5" width="13" height="10" fill="#fff" stroke="#000"/><rect x="0" y="0" width="14" height="3.5" fill="#000"/></svg><div class="a" style="left:0;top:798px;width:1500px;height:46px;background:#dcdcdc"></div><div class="t" style="left:2px;top:808px;font-size:10px;color:#111;letter-spacing:.12px">247.9506,120.2396</div><div class="t" style="left:2px;top:828.5px;font-size:10px;color:#111;letter-spacing:.12px">@247.9506,120.2396</div><div class="a" style="left:253px;top:802px;width:1px;height:40px;background:#777"></div><div class="t" style="left:256px;top:808px;font-size:10px;color:#111;letter-spacing:.12px">275.5668&lt;26°</div><div class="t" style="left:256px;top:828.5px;font-size:10px;color:#111;letter-spacing:.12px">@275.5668&lt;26°</div><div class="t" style="left:499px;width:200px;text-align:right;top:811.5px;font-size:10px;color:#111;letter-spacing:.12px">Select entity or region</div><div class="t" style="left:499px;width:200px;text-align:right;top:822.5px;font-size:10px;color:#111;letter-spacing:.12px">Move entity or reference</div><div class="t" style="left:949px;top:811.5px;font-size:10px;color:#111;letter-spacing:.12px">Selected entities:</div><div class="t" style="left:949px;top:822.5px;font-size:10px;color:#111;letter-spacing:.12px">140 Entities on 3 Layers.</div><div class="a" style="left:506px;top:819px;width:6px;height:6px;border-radius:3px;background:#cdcdcd"></div><div class="a" style="left:940px;top:819px;width:6px;height:6px;border-radius:3px;background:#cdcdcd"></div><div class="a" style="left:1269px;top:819px;width:6px;height:6px;border-radius:3px;background:#cdcdcd"></div><svg style="left:0px;top:0px" width="1500" height="844" viewBox="0 0 1500 844"><rect x="717.5" y="806" width="17.5" height="29.5" rx="6.5" ry="7" fill="#fff" stroke="#444" stroke-width=".9"/><path d="M717.5,818.2 h17.5 M726.2,806 v2 M726.2,816 v2.2" stroke="#444" stroke-width=".8" fill="none"/><rect x="724.9" y="807.6" width="2.7" height="8.4" rx="1.35" fill="#fff" stroke="#444" stroke-width=".8"/></svg>
</body></html>
